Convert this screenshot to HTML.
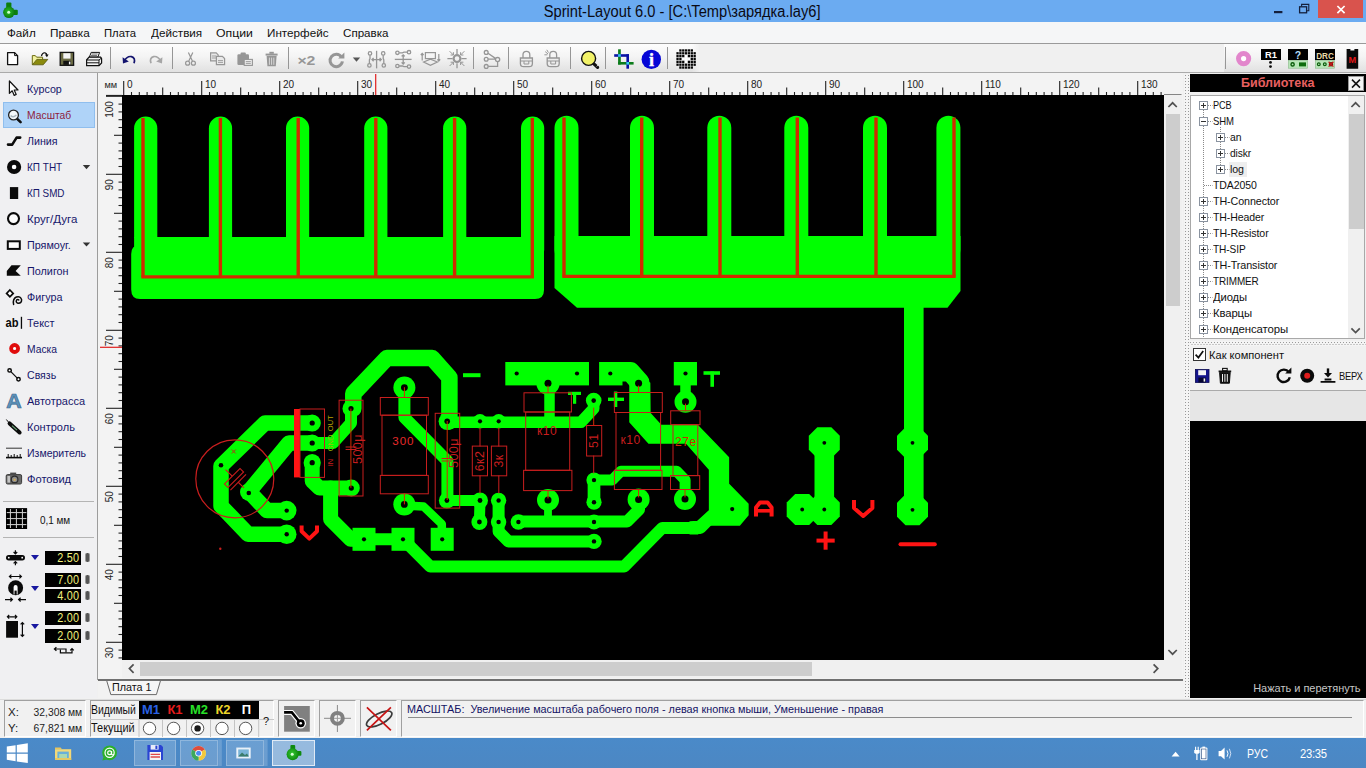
<!DOCTYPE html>
<html lang="ru"><head><meta charset="utf-8"><title>Sprint-Layout 6.0</title>
<style>
html,body{margin:0;padding:0}
body{width:1366px;height:768px;overflow:hidden;position:relative;background:#f0f0f0;font-family:"Liberation Sans",sans-serif;font-size:11px;color:#000}
.abs{position:absolute}
#title{left:0;top:0;width:1366px;height:22.6px;background:#6babf1;box-shadow:0 0.5px 0 #5f98d6}
#title .t{left:-1.2px;width:1366px;top:2.5px;text-align:center;font-size:15.6px;color:#0a0a14;line-height:18px;white-space:nowrap}
#closeb{left:1318px;top:0;width:45px;height:18px;background:#d9534d}
#menu{left:0;top:22px;width:1366px;height:21px;background:#f5f6f7}
#menu > span{position:absolute;top:3px;font-size:11.6px;line-height:15px;color:#111;white-space:nowrap}
#tb{left:0;top:43px;width:1366px;height:30px;background:#f0f0f0;border-top:1px solid #9a9a9a;border-bottom:1px solid #aaa;box-sizing:border-box}
.sep{position:absolute;top:47px;width:1px;height:22px;background:#969696}
#left{left:0;top:73px;width:97px;height:625px;background:#f0f0f2}
#leftb{left:97px;top:73px;width:1px;height:607px;background:#9c9c9c}
.tool{position:absolute;left:26.7px;font-size:11.2px;color:#16166a;line-height:14px;white-space:nowrap}
#rul{left:98px;top:73px;width:1085px;height:607px;background:#f3f3f3}
#hs{left:122px;top:660px;width:1042px;height:18px;background:#f0f0f0}
#hs .th{position:absolute;left:18px;top:2px;width:672px;height:14px;background:#cdcdcd}
#vs{left:1164px;top:95px;width:18px;height:565px;background:#f0f0f0}
#vs .th{position:absolute;left:1.5px;top:18.5px;width:14.5px;height:192px;background:#cdcdcd}
#corner{left:1164px;top:660px;width:18px;height:18px;background:#f0f0f0}
#dline{left:98px;top:679px;width:1085px;height:2px;background:#707070}
#tabs{left:98px;top:681px;width:1092px;height:17px;background:#f2f2f2}
#split{left:1184px;top:74px;width:6px;height:624px;background-color:#f4f4f4;background-image:radial-gradient(#999 0.7px,transparent 0.9px);background-size:3px 3px}
#lib{left:1190px;top:74px;width:176px;height:18px;background:#000}
#lib .t{position:absolute;left:0;width:176px;top:1px;text-align:center;font-weight:bold;font-size:13.2px;line-height:16px;color:#e86060}
#libx{left:1348px;top:76px;width:16px;height:15px;background:#f4f4f4;border:1px solid #999;box-sizing:border-box}
#tree{left:1190px;top:95px;width:175px;height:244px;background:#fff;border:1px solid #a8a8a8;box-sizing:border-box;overflow:hidden}
.ti{position:absolute;font-size:11.3px;line-height:14px;color:#111;white-space:nowrap;letter-spacing:-0.1px}
.bx{position:absolute;width:9px;height:9px;border:1px solid #8a93a0;box-sizing:border-box;background:#fff}
.bx:before{content:"";position:absolute;left:1px;top:3px;width:5px;height:1px;background:#333}
.bx.p:after{content:"";position:absolute;left:3px;top:1px;width:1px;height:5px;background:#333}
#tsb{left:1348px;top:96px;width:16px;height:242px;background:#f0f0f0}
#tsb .th{position:absolute;left:1px;top:18px;width:15px;height:115px;background:#cdcdcd}
#rp{left:1190px;top:339px;width:176px;height:52px;background:#f0f0f0}
#gray{left:1190px;top:390px;width:176px;height:31px;background:#e6e6e6;border-top:1px solid #aaa;box-sizing:border-box}
#prev{left:1190px;top:421px;width:176px;height:278px;background:#000}
#prev > span{position:absolute;right:6px;bottom:4px;color:#c6c6c6;font-size:11.5px;line-height:14px;white-space:nowrap}
#status{left:0;top:698px;width:1366px;height:40px;background:#f1f1f1}
.panel{position:absolute;box-sizing:border-box;border:1px solid #a0a0a0;border-right-color:#fff;border-bottom-color:#fff;background:#f1f1f1}
#task{left:0;top:738px;width:1366px;height:30px;background:linear-gradient(#4a8ac9,#4c87c3)}
.tbtn{position:absolute;top:739.5px;height:26.5px;background:rgba(255,255,255,.18);box-sizing:border-box;border:1px solid rgba(255,255,255,.25)}
.vbox{position:absolute;left:45px;width:36px;height:14px;background:#000;color:#f2f27c;font-size:12px;line-height:14px;text-align:right;padding-right:2px;box-sizing:border-box;letter-spacing:.2px}
.hnd{position:absolute;left:85px;width:5px;height:9px;background:#555;border-radius:2px;border-left:1px solid #999;border-right:1px solid #999;box-sizing:border-box}
.tri{position:absolute;left:31px;width:0;height:0;border-left:4px solid transparent;border-right:4px solid transparent;border-top:5px solid #1818a0}
.hl{position:absolute;left:3px;width:91px;height:1px;background:#b4b4b4}

.tbg{position:absolute;top:44px;height:28px;background:linear-gradient(#fdfdfd,#f4f4f4 45%,#e1e1e1)}

</style></head>
<body>
<div id="title" class="abs"><div class="t abs"><span style="display:inline-block;white-space:pre;transform:scaleX(0.9405);transform-origin:center center">Sprint-Layout 6.0 - [C:\Temp\зарядка.lay6]</span></div></div>
<div id="closeb" class="abs"></div>
<div id="menu" class="abs"><span style="left:7px"><span style="display:inline-block;white-space:pre;transform:scaleX(1.0065);transform-origin:left center">Файл</span></span><span style="left:50px"><span style="display:inline-block;white-space:pre;transform:scaleX(1.0135);transform-origin:left center">Правка</span></span><span style="left:104px"><span style="display:inline-block;white-space:pre;transform:scaleX(0.9750);transform-origin:left center">Плата</span></span><span style="left:151px"><span style="display:inline-block;white-space:pre;transform:scaleX(1.0079);transform-origin:left center">Действия</span></span><span style="left:216px"><span style="display:inline-block;white-space:pre;transform:scaleX(1.0576);transform-origin:left center">Опции</span></span><span style="left:267px"><span style="display:inline-block;white-space:pre;transform:scaleX(1.0069);transform-origin:left center">Интерфейс</span></span><span style="left:343px"><span style="display:inline-block;white-space:pre;transform:scaleX(1.0003);transform-origin:left center">Справка</span></span></div>
<div id="tb" class="abs"></div><div class="tbg" style="left:0;width:699px"></div><div class="tbg" style="left:1224px;width:142px"></div><div class="abs" style="left:692px;top:44px;width:8px;height:28px;background:linear-gradient(to right,rgba(240,240,240,0),#f0f0f0)"></div>
<div class="sep" style="left:110px"></div><div class="sep" style="left:172px"></div><div class="sep" style="left:288px"></div><div class="sep" style="left:473px"></div><div class="sep" style="left:508px"></div><div class="sep" style="left:570px"></div><div class="sep" style="left:605px"></div><div class="sep" style="left:667px"></div><div class="sep" style="left:1225px"></div>
<svg style="position:absolute;left:0;top:0;pointer-events:none" width="1366" height="768" viewBox="0 0 1366 768" font-family="'Liberation Sans', sans-serif" ><path d="M7.6,52.6 H14.6 L17.6,55.6 V64.6 H7.6 Z" fill="#fff" stroke="#111" stroke-width="1.3" stroke-linejoin="round"/><path d="M14.6,52.6 V55.6 H17.6" fill="none" stroke="#111" stroke-width="1"/><path d="M32.3,64.7 V55.6 H35.3 L36.6,57.2 H42.6 V59.5" fill="#f2f2a0" stroke="#6a6a10" stroke-width="1"/><path d="M32.4,64.8 L36.8,59.4 H47.8 L43.2,64.8 Z" fill="#8a8a0c" stroke="#55550a" stroke-width=".8"/><path d="M41.4,56 Q42.4,52.4 45,52.8 Q46.8,53.2 46.9,55.2" fill="none" stroke="#111" stroke-width="1.2"/><path d="M44.9,54.4 L48.6,54.6 L46.9,57.2 Z" fill="#111"/><rect x="60.2" y="52.4" width="13.4" height="12.9" fill="#6b6b44" stroke="#111" stroke-width="1.3"/><rect x="63.3" y="53.2" width="7.2" height="5.4" fill="#f4f4f4"/><rect x="63.3" y="60.8" width="7.4" height="4" fill="#111"/><rect x="68.9" y="61.6" width="1.5" height="2.8" fill="#f4f4f4"/><path d="M89.3,57.2 L91.2,52.4 H99.6 L97.8,57.2 Z" fill="#fff" stroke="#111" stroke-width="1"/><path d="M86.6,60 L89,57.2 H100.6 L101.6,58.6 V63 L99,65.6 H86.6 Z" fill="#f4f4f4" stroke="#111" stroke-width="1.2"/><path d="M86.6,60 H99 L101.6,58 M99,60 V65.6 M86.6,62.8 H99" fill="none" stroke="#111" stroke-width="1"/><path d="M91.6,54 H97.6 M91,55.6 H97" stroke="#444" stroke-width=".8"/><path d="M124.6,60.6 Q127.2,55.8 131.4,56.6 Q135.8,57.8 134,63.2" fill="none" stroke="#14146e" stroke-width="1.7"/><path d="M122.6,57.2 L123,63.4 L128.8,61.6 Z" fill="#14146e"/><path d="M160.4,60.6 Q157.8,55.8 153.6,56.6 Q149.2,57.8 151,63.2" fill="none" stroke="#a6a6a6" stroke-width="1.7"/><path d="M162.4,57.2 L162,63.4 L156.2,61.6 Z" fill="#a6a6a6"/><g fill="none" stroke="#969696" stroke-width="1.2"><path d="M188.4,52.4 L192.4,61 M192.8,52.4 L188.8,61"/><circle cx="187.6" cy="63.2" r="2"/><circle cx="193.4" cy="63.2" r="2"/></g><g fill="#e9e9e9" stroke="#969696" stroke-width="1.2"><path d="M210.6,52.9 H216.2 L218.2,54.9 V60.9 H210.6 Z"/><path d="M216.4,56.4 H222.4 L224.6,58.6 V64.6 H216.4 Z"/></g><path d="M212,56 H216 M212,58 H216 M218,60.6 H223 M218,62.4 H223" stroke="#969696" stroke-width=".9"/><rect x="237.4" y="54.2" width="11.6" height="10.8" rx="1.2" fill="#969696"/><rect x="240.6" y="52.6" width="5.2" height="3" rx="1" fill="#969696"/><rect x="244.2" y="59.4" width="8.2" height="6" fill="#ececec" stroke="#969696" stroke-width="1.1"/><path d="M245.8,61.6 H250.8 M245.8,63.4 H250.8" stroke="#969696" stroke-width=".9"/><path d="M266.6,56 H276.6 L275.8,66.2 H267.4 Z" fill="#969696"/><rect x="265.6" y="53.6" width="12" height="2" fill="#969696"/><rect x="269.4" y="51.8" width="4.4" height="2" fill="#969696"/><path d="M269.4,57.6 V64.8 M271.6,57.6 V64.8 M273.8,57.6 V64.8" stroke="#dedede" stroke-width=".9"/><text x="297.4" y="64.6" font-size="13.6" font-weight="bold" fill="#969696" textLength="18" lengthAdjust="spacingAndGlyphs">×2</text><path d="M341.4,57 A6.2,6.2 0 1 0 342.4,61.4" fill="none" stroke="#969696" stroke-width="3"/><path d="M338.2,58.6 L344.4,58.6 L344.4,52.4 Z" fill="#969696"/><path d="M352.8,57.6 H360.2 L356.5,61.8 Z" fill="#555"/><g fill="none" stroke="#969696" stroke-width="1.3"><path d="M376.6,50.8 V68.4"/><circle cx="370" cy="53.4" r="1.7"/><circle cx="369.4" cy="65.4" r="1.7"/><path d="M370,55.2 V58.6 L369.4,60 V63.6"/><circle cx="383.2" cy="53.4" r="1.7"/><circle cx="383.8" cy="65.4" r="1.7"/><path d="M383.2,55.2 V58.6 L383.8,60 V63.6"/><path d="M372,59.6 H381.2 M373.6,58 L372,59.6 L373.6,61.2 M379.6,58 L381.2,59.6 L379.6,61.2"/></g><g fill="none" stroke="#969696" stroke-width="1.3"><path d="M394.8,59.4 H411.6"/><circle cx="397.4" cy="52.8" r="1.7"/><circle cx="409" cy="52.2" r="1.7"/><path d="M399.2,52.8 H402.4 L404,52.2 H407.2"/><circle cx="397.4" cy="66" r="1.7"/><circle cx="409" cy="66.6" r="1.7"/><path d="M399.2,66 H402.4 L404,66.6 H407.2"/><path d="M403.2,54.8 V64 M401.6,56.4 L403.2,54.8 L404.8,56.4 M401.6,62.4 L403.2,64 L404.8,62.4"/></g><g fill="none" stroke="#969696" stroke-width="1.2"><rect x="425.4" y="52.6" width="10" height="6"/><path d="M423.6,62 L430.4,59.2 L437.4,62 L430.4,65.4 Z"/><path d="M422.2,60.4 V53.4 M420.8,55 L422.2,53.4 L423.6,55 M438.8,54 V61 M437.4,59.4 L438.8,61 L440.2,59.4"/></g><g fill="none" stroke="#969696" stroke-width="1.3"><circle cx="457" cy="58.6" r="3.4" stroke-width="2.2"/><path d="M447.4,58.6 H452.6 M461.4,58.6 H466.6 M457,49 V54 M457,63.2 V68.2"/><path d="M449.6,51.2 L453.4,55 M450.6,55 H453.4 V52.2 M464.4,51.2 L460.6,55 M463.4,55 H460.6 V52.2 M449.6,66 L453.4,62.2 M450.6,62.2 H453.4 V65 M464.4,66 L460.6,62.2 M463.4,62.2 H460.6 V65" stroke-width="1"/></g><g fill="none" stroke="#969696" stroke-width="1.3"><circle cx="486.2" cy="52.4" r="1.9"/><circle cx="486.2" cy="59.2" r="1.9"/><circle cx="486.2" cy="66.4" r="1.9"/><circle cx="497.6" cy="59.6" r="2.1"/><path d="M488,53.2 L495.8,58.6 M488.2,59.2 H495.4 M488.2,66.4 H497.6 V61.8"/></g><g fill="none" stroke="#969696" stroke-width="1.3"><path d="M523.0,58 V54.8 A3.4,3.4 0 0 1 529.8,54.8 V58"/><path d="M520.4,58 H532.4 V63.4 Q532.4,66.6 529.0,66.6 H523.8 Q520.4,66.6 520.4,63.4 Z" fill="#ececec"/><path d="M520.4,61 H532.4 M524.0,61 V64 H528.8 V61" stroke-width="1"/></g><g fill="none" stroke="#969696" stroke-width="1.3"><path d="M549.8000000000001,58 V54.8 A3.4,3.4 0 0 1 556.6,54.8 V58"/><path d="M547.2,58 H559.2 V63.4 Q559.2,66.6 555.8000000000001,66.6 H550.6 Q547.2,66.6 547.2,63.4 Z" fill="#ececec"/><path d="M547.2,61 H559.2 M550.8000000000001,61 V64 H555.6 V61" stroke-width="1"/></g><path d="M545.2,51.6 L548,54 M544.4,54.8 H547.4 M546.8,49.8 L548.4,52.6" stroke="#969696" stroke-width="1"/><path d="M593.6,63.6 L597.6,67.4" stroke="#111" stroke-width="3.2" stroke-linecap="round"/><circle cx="588.6" cy="58.4" r="7" fill="#f2f268" stroke="#111" stroke-width="1.4"/><path d="M596.6,66.4 L598.2,65" stroke="#fff" stroke-width=".8"/><rect x="618.1" y="49.3" width="2.7" height="15.2" fill="#0c7c1c"/><rect x="618.1" y="62" width="15.5" height="2.6" fill="#0c7c1c"/><rect x="614.2" y="54.2" width="14.8" height="2.6" fill="#0a12a4"/><rect x="626.4" y="54.2" width="2.6" height="14.5" fill="#0a12a4"/><rect x="618.1" y="54.2" width="2.7" height="2.6" fill="#34ccf2"/><rect x="626.4" y="62" width="2.6" height="2.6" fill="#34ccf2"/><circle cx="651.3" cy="59.4" r="9.7" fill="#0606d6"/><text x="651.4" y="65.6" font-family="'Liberation Serif', serif" font-size="18" font-weight="bold" fill="#fff" stroke="#fff" stroke-width=".4" text-anchor="middle">i</text><circle cx="686.1" cy="59" r="9.6" fill="#f6f6f6"/><rect x="676.40" y="52.15" width="2.3" height="2.3" fill="#050505"/><rect x="676.40" y="55.00" width="2.3" height="2.3" fill="#050505"/><rect x="676.40" y="57.85" width="2.3" height="2.3" fill="#050505"/><rect x="676.40" y="60.70" width="2.3" height="2.3" fill="#050505"/><rect x="676.40" y="63.55" width="2.3" height="2.3" fill="#050505"/><rect x="679.25" y="49.30" width="2.3" height="2.3" fill="#050505"/><rect x="679.25" y="52.15" width="2.3" height="2.3" fill="#050505"/><rect x="679.25" y="55.00" width="2.3" height="2.3" fill="#050505"/><rect x="679.25" y="57.85" width="2.3" height="2.3" fill="#050505"/><rect x="679.25" y="60.70" width="2.3" height="2.3" fill="#050505"/><rect x="679.25" y="63.55" width="2.3" height="2.3" fill="#050505"/><rect x="679.25" y="66.40" width="2.3" height="2.3" fill="#050505"/><rect x="682.10" y="49.30" width="2.3" height="2.3" fill="#050505"/><rect x="682.10" y="52.15" width="2.3" height="2.3" fill="#050505"/><rect x="682.10" y="55.00" width="2.3" height="2.3" fill="#050505"/><rect x="682.10" y="57.85" width="2.3" height="2.3" fill="#fff"/><rect x="682.10" y="60.70" width="2.3" height="2.3" fill="#050505"/><rect x="682.10" y="63.55" width="2.3" height="2.3" fill="#050505"/><rect x="682.10" y="66.40" width="2.3" height="2.3" fill="#050505"/><rect x="684.95" y="49.30" width="2.3" height="2.3" fill="#050505"/><rect x="684.95" y="52.15" width="2.3" height="2.3" fill="#050505"/><rect x="684.95" y="55.00" width="2.3" height="2.3" fill="#fff"/><rect x="684.95" y="57.85" width="2.3" height="2.3" fill="#fff"/><rect x="684.95" y="60.70" width="2.3" height="2.3" fill="#fff"/><rect x="684.95" y="63.55" width="2.3" height="2.3" fill="#050505"/><rect x="684.95" y="66.40" width="2.3" height="2.3" fill="#050505"/><rect x="687.80" y="49.30" width="2.3" height="2.3" fill="#050505"/><rect x="687.80" y="52.15" width="2.3" height="2.3" fill="#050505"/><rect x="687.80" y="55.00" width="2.3" height="2.3" fill="#050505"/><rect x="687.80" y="57.85" width="2.3" height="2.3" fill="#fff"/><rect x="687.80" y="60.70" width="2.3" height="2.3" fill="#050505"/><rect x="687.80" y="63.55" width="2.3" height="2.3" fill="#050505"/><rect x="687.80" y="66.40" width="2.3" height="2.3" fill="#050505"/><rect x="690.65" y="49.30" width="2.3" height="2.3" fill="#050505"/><rect x="690.65" y="52.15" width="2.3" height="2.3" fill="#050505"/><rect x="690.65" y="55.00" width="2.3" height="2.3" fill="#050505"/><rect x="690.65" y="57.85" width="2.3" height="2.3" fill="#050505"/><rect x="690.65" y="60.70" width="2.3" height="2.3" fill="#050505"/><rect x="690.65" y="63.55" width="2.3" height="2.3" fill="#050505"/><rect x="690.65" y="66.40" width="2.3" height="2.3" fill="#050505"/><rect x="693.50" y="52.15" width="2.3" height="2.3" fill="#050505"/><rect x="693.50" y="55.00" width="2.3" height="2.3" fill="#050505"/><rect x="693.50" y="57.85" width="2.3" height="2.3" fill="#050505"/><rect x="693.50" y="60.70" width="2.3" height="2.3" fill="#050505"/><rect x="693.50" y="63.55" width="2.3" height="2.3" fill="#050505"/><circle cx="1243.6" cy="58.6" r="5.1" fill="#fff" stroke="#e286cc" stroke-width="5"/><rect x="1261" y="49" width="20" height="11" fill="#000"/><text x="1271" y="58" font-size="9.4" font-weight="bold" fill="#fff" text-anchor="middle">R1</text><circle cx="1270.5" cy="62.4" r="1.4" fill="#111"/><circle cx="1270.5" cy="66.6" r="1.4" fill="#111"/><rect x="1288" y="49" width="20" height="11" fill="#000"/><text x="1298" y="59.2" font-size="10.5" font-weight="bold" fill="#b4dcf8" text-anchor="middle">?</text><rect x="1288.4" y="60.4" width="19.2" height="7.8" fill="#b8e6b8" stroke="#8ab88a" stroke-width=".6"/><circle cx="1292.6" cy="64.4" r="1.6" fill="none" stroke="#0c5c0c" stroke-width="1.4"/><rect x="1299" y="62.4" width="7" height="4" fill="#0c6c0c"/><rect x="1315" y="49" width="20" height="11" fill="#000"/><text x="1325" y="58.6" font-size="9.6" font-weight="bold" fill="#e8d8a8" text-anchor="middle" textLength="17.6" lengthAdjust="spacingAndGlyphs">DRC</text><rect x="1315.4" y="60.4" width="19.2" height="7.8" fill="#b8e6b8" stroke="#8ab88a" stroke-width=".6"/><circle cx="1318.8" cy="64.2" r="1.4" fill="none" stroke="#0c5c0c" stroke-width="1.2"/><circle cx="1324.8" cy="64.2" r="1.4" fill="none" stroke="#0c5c0c" stroke-width="1.2"/><circle cx="1331" cy="64.2" r="1.6" fill="none" stroke="#701010" stroke-width="1.3"/><path d="M1328.6,61.8 L1333.4,66.6 M1333.4,61.8 L1328.6,66.6" stroke="#c01818" stroke-width="1.3"/><path d="M1346.6,49 H1350.4 V50.4 H1354.4 V49 H1358.2 V68.8 H1346.6 Z" fill="#0a0a0a"/><text x="1352.4" y="62.6" font-size="9.2" font-weight="bold" fill="#e01818" text-anchor="middle">M</text></svg>
<div id="left" class="abs"></div><div id="leftb" class="abs"></div>
<div class="abs" style="left:3px;top:102px;width:92px;height:26px;background:#afd3f8;border:1px solid #8fbeee;box-sizing:border-box"></div>
<div class="tool" style="top:82.1px"><span style="display:inline-block;white-space:pre;transform:scaleX(0.9567);transform-origin:left center">Курсор</span></div>
<div class="tool" style="top:108.1px;color:#8e1c3c"><span style="display:inline-block;white-space:pre;transform:scaleX(0.9232);transform-origin:left center">Масштаб</span></div>
<div class="tool" style="top:134.1px"><span style="display:inline-block;white-space:pre;transform:scaleX(0.9539);transform-origin:left center">Линия</span></div>
<div class="tool" style="top:160.1px"><span style="display:inline-block;white-space:pre;transform:scaleX(0.8929);transform-origin:left center">КП ТНТ</span></div>
<div class="tool" style="top:186.1px"><span style="display:inline-block;white-space:pre;transform:scaleX(0.8817);transform-origin:left center">КП SMD</span></div>
<div class="tool" style="top:212.1px"><span style="display:inline-block;white-space:pre;transform:scaleX(1.0312);transform-origin:left center">Круг/Дуга</span></div>
<div class="tool" style="top:238.1px"><span style="display:inline-block;white-space:pre;transform:scaleX(0.9624);transform-origin:left center">Прямоуг.</span></div>
<div class="tool" style="top:264.1px"><span style="display:inline-block;white-space:pre;transform:scaleX(0.9667);transform-origin:left center">Полигон</span></div>
<div class="tool" style="top:290.1px"><span style="display:inline-block;white-space:pre;transform:scaleX(0.9633);transform-origin:left center">Фигура</span></div>
<div class="tool" style="top:316.1px"><span style="display:inline-block;white-space:pre;transform:scaleX(0.9762);transform-origin:left center">Текст</span></div>
<div class="tool" style="top:342.1px"><span style="display:inline-block;white-space:pre;transform:scaleX(0.9195);transform-origin:left center">Маска</span></div>
<div class="tool" style="top:368.1px"><span style="display:inline-block;white-space:pre;transform:scaleX(0.9443);transform-origin:left center">Связь</span></div>
<div class="tool" style="top:394.1px"><span style="display:inline-block;white-space:pre;transform:scaleX(0.9810);transform-origin:left center">Автотрасса</span></div>
<div class="tool" style="top:420.1px"><span style="display:inline-block;white-space:pre;transform:scaleX(0.9854);transform-origin:left center">Контроль</span></div>
<div class="tool" style="top:446.1px"><span style="display:inline-block;white-space:pre;transform:scaleX(0.9416);transform-origin:left center">Измеритель</span></div>
<div class="tool" style="top:472.1px"><span style="display:inline-block;white-space:pre;transform:scaleX(0.9928);transform-origin:left center">Фотовид</span></div>
<div class="hl" style="top:501px"></div><div class="hl" style="top:537px"></div>
<div class="abs" style="left:40px;top:512.5px;font-size:11.5px;line-height:14px;color:#111;white-space:nowrap"><span style="display:inline-block;white-space:pre;transform:scaleX(0.8629);transform-origin:left center">0,1 мм</span></div>
<div class="vbox" style="top:551px"><span style="display:inline-block;white-space:pre;transform:scaleX(0.9066);transform-origin:right center">2.50</span></div><div class="hnd" style="top:553px"></div>
<div class="vbox" style="top:573px"><span style="display:inline-block;white-space:pre;transform:scaleX(0.9066);transform-origin:right center">7.00</span></div><div class="hnd" style="top:575px"></div>
<div class="vbox" style="top:589px"><span style="display:inline-block;white-space:pre;transform:scaleX(0.9066);transform-origin:right center">4.00</span></div><div class="hnd" style="top:591px"></div>
<div class="vbox" style="top:611px"><span style="display:inline-block;white-space:pre;transform:scaleX(0.9066);transform-origin:right center">2.00</span></div><div class="hnd" style="top:613px"></div>
<div class="vbox" style="top:628.5px"><span style="display:inline-block;white-space:pre;transform:scaleX(0.9066);transform-origin:right center">2.00</span></div><div class="hnd" style="top:631px"></div>
<div class="tri" style="top:555px"></div><div class="tri" style="top:586px"></div><div class="tri" style="top:624px"></div>
<svg style="position:absolute;left:0;top:0;pointer-events:none" width="1366" height="768" viewBox="0 0 1366 768" font-family="'Liberation Sans', sans-serif" ><path d="M9.4,81 V93.4 L12.2,90.8 L14.2,95.4 L16.2,94.5 L14.2,90 H18 Z" fill="#fff" stroke="#111" stroke-width="1.2" stroke-linejoin="round"/><path d="M17.2,118.8 L20.6,122.2" stroke="#111" stroke-width="2.6" stroke-linecap="round"/><circle cx="13.5" cy="115" r="4.9" fill="#f4f8fa" stroke="#222" stroke-width="1.3"/><path d="M10.6,115.6 Q13.4,118 16.4,115" fill="none" stroke="#a8b4bc" stroke-width="1.4"/><path d="M8,144.6 H12.2 L16.6,137.6 H20.2" fill="none" stroke="#0c0c0c" stroke-width="2.6" stroke-linecap="round" stroke-linejoin="round"/><circle cx="14.1" cy="167" r="4.7" fill="#fff" stroke="#0a0a0a" stroke-width="4.8"/><path d="M82.8,165 H90.2 L86.5,169.2 Z" fill="#333"/><path d="M82.8,242.4 H90.2 L86.5,246.6 Z" fill="#333"/><rect x="9.9" y="187.1" width="8.3" height="11.9" fill="#0a0a0a"/><circle cx="13.5" cy="218.6" r="5.5" fill="#fdfdfd" stroke="#0a0a0a" stroke-width="2.1"/><rect x="7.8" y="241.3" width="12" height="7.6" fill="#fdfdfd" stroke="#0a0a0a" stroke-width="2"/><path d="M6.8,275.8 V271 L11.5,265.3 H20.8 L15.6,271 L20.8,275.8 Z" fill="#0a0a0a"/><path d="M9.9,290 L13.2,293.4 L9.9,296.8 L6.6,293.4 Z" fill="#fff" stroke="#0a0a0a" stroke-width="1.7"/><path d="M13.6,304.4 Q12.4,299 16.4,297 Q20.6,295.8 21.6,299.6 Q21.8,303.4 18,303.2 Q15.4,302.4 16.6,300 Q17.8,298.8 18.8,300" fill="none" stroke="#0a0a0a" stroke-width="1.5" stroke-linecap="round"/><text x="5.6" y="327.4" font-size="13.4" font-weight="bold" fill="#0a0a0a" textLength="13" lengthAdjust="spacingAndGlyphs">ab</text><rect x="20.8" y="316.8" width="1.3" height="12" fill="#0a0a0a"/><circle cx="14.6" cy="348.5" r="3.5" fill="#fbd8d8" stroke="#e00c0c" stroke-width="3.8"/><circle cx="14.6" cy="348.5" r="1.2" fill="#fff"/><path d="M9.6,370.4 L18.5,379.3" stroke="#0a0a0a" stroke-width="1.2"/><circle cx="9.6" cy="370.4" r="1.7" fill="#fff" stroke="#0a0a0a" stroke-width="1.5"/><circle cx="18.5" cy="379.3" r="1.7" fill="#fff" stroke="#0a0a0a" stroke-width="1.5"/><text x="14" y="407.6" font-size="19.5" font-weight="bold" fill="#5f93ba" stroke="#3e6c92" stroke-width=".7" text-anchor="middle" textLength="15.4" lengthAdjust="spacingAndGlyphs">A</text><path d="M6.6,419.8 L10,424" stroke="#111" stroke-width="1" stroke-linecap="round"/><path d="M9.6,423.4 L19.6,432.4" stroke="#0c0c0c" stroke-width="4" stroke-linecap="round"/><path d="M12,425.6 L17,430.2" stroke="#6ea87c" stroke-width="1.1"/><path d="M19.4,432 L20.8,434" stroke="#111" stroke-width="1.4"/><path d="M6,448.2 H22" stroke="#333" stroke-width="1"/><path d="M6,457.6 H22" stroke="#0a0a0a" stroke-width="1.6"/><path d="M8.2,457 V454 M11.2,457 V455 M14.2,457 V454 M17.2,457 V455 M20.2,457 V454" stroke="#0a0a0a" stroke-width="1"/><rect x="6.2" y="474.6" width="15.4" height="9.4" rx="1.4" fill="#6a6a6a" stroke="#3a3a3a" stroke-width="1"/><rect x="10.2" y="472.6" width="6" height="2.6" fill="#4a4a4a"/><circle cx="14.6" cy="479.4" r="3.3" fill="#8c8c8c" stroke="#2c2c2c" stroke-width="1.2"/><circle cx="14.6" cy="479.8" r="1.3" fill="#c8a860"/><rect x="7.4" y="476" width="2.6" height="6.6" fill="#c4c4c4"/><rect x="6" y="508.1" width="21.1" height="20.9" fill="#000"/><path d="M10.4,509 V528 M16.4,509 V528 M22.4,509 V528 M6.8,512.6 H26.4 M6.8,518.6 H26.4 M6.8,524.6 H26.4" stroke="#d4d4d4" stroke-width="1"/><rect x="6" y="555" width="19" height="5.4" rx="2.7" fill="#0a0a0a"/><circle cx="8.8" cy="557.7" r=".9" fill="#fff"/><circle cx="22.2" cy="557.7" r=".9" fill="#fff"/><path d="M15.4,550.2 V553.4 M13.6,552 L15.4,553.8 L17.2,552 M15.4,565.2 V562 M13.6,563.4 L15.4,561.6 L17.2,563.4" fill="none" stroke="#0a0a0a" stroke-width="1.2"/><circle cx="15.6" cy="587.8" r="7.5" fill="#0a0a0a"/><path d="M13.6,594.6 V587 Q13.6,585 15.6,585 Q17.6,585 17.6,587 V594.6 Z" fill="#fff"/><rect x="14.5" y="590.6" width="2.2" height="4.4" fill="#0a0a0a"/><path d="M9.4,576.5 H21.4 M11.4,574.6 L9.4,576.5 L11.4,578.4 M19.4,574.6 L21.4,576.5 L19.4,578.4" fill="none" stroke="#0a0a0a" stroke-width="1.2"/><path d="M5,599.6 H12.4 M10.4,597.7 L12.4,599.6 L10.4,601.5 M26,599.6 H18.6 M20.6,597.7 L18.6,599.6 L20.6,601.5" fill="none" stroke="#0a0a0a" stroke-width="1.2"/><rect x="6.1" y="621" width="11.9" height="16.7" fill="#0a0a0a"/><path d="M7.4,616.8 H16.8 M9.2,615 L7.4,616.8 L9.2,618.6 M15,615 L16.8,616.8 L15,618.6" fill="none" stroke="#0a0a0a" stroke-width="1.2"/><path d="M22.4,622.6 V636.4 M20.6,624.4 L22.4,622.6 L24.2,624.4 M20.6,634.6 L22.4,636.4 L24.2,634.6" fill="none" stroke="#0a0a0a" stroke-width="1.2"/><path d="M54.4,649 H66 V652.6 M56.4,647.2 L54.4,649 L56.4,650.8" fill="none" stroke="#0a0a0a" stroke-width="1.2"/><path d="M60.4,649.4 V652.8 H72 V648.6 M70.2,650.4 L72,648.6 L73.8,650.4" fill="none" stroke="#0a0a0a" stroke-width="1.2"/></svg>
<div id="rul" class="abs"></div>
<svg style="position:absolute;left:0;top:0" width="1366" height="96" font-family="'Liberation Sans', sans-serif" font-size="10" fill="#222"><g stroke="#222" stroke-width="1.1"><line x1="123.7" y1="81" x2="123.7" y2="95"/><line x1="131.5" y1="92" x2="131.5" y2="95"/><line x1="139.3" y1="92" x2="139.3" y2="95"/><line x1="147.1" y1="92" x2="147.1" y2="95"/><line x1="154.9" y1="92" x2="154.9" y2="95"/><line x1="162.7" y1="87.5" x2="162.7" y2="95"/><line x1="170.5" y1="92" x2="170.5" y2="95"/><line x1="178.3" y1="92" x2="178.3" y2="95"/><line x1="186.1" y1="92" x2="186.1" y2="95"/><line x1="193.9" y1="92" x2="193.9" y2="95"/><line x1="201.7" y1="81" x2="201.7" y2="95"/><line x1="209.5" y1="92" x2="209.5" y2="95"/><line x1="217.3" y1="92" x2="217.3" y2="95"/><line x1="225.1" y1="92" x2="225.1" y2="95"/><line x1="232.9" y1="92" x2="232.9" y2="95"/><line x1="240.7" y1="87.5" x2="240.7" y2="95"/><line x1="248.5" y1="92" x2="248.5" y2="95"/><line x1="256.3" y1="92" x2="256.3" y2="95"/><line x1="264.1" y1="92" x2="264.1" y2="95"/><line x1="271.9" y1="92" x2="271.9" y2="95"/><line x1="279.7" y1="81" x2="279.7" y2="95"/><line x1="287.5" y1="92" x2="287.5" y2="95"/><line x1="295.3" y1="92" x2="295.3" y2="95"/><line x1="303.1" y1="92" x2="303.1" y2="95"/><line x1="310.9" y1="92" x2="310.9" y2="95"/><line x1="318.7" y1="87.5" x2="318.7" y2="95"/><line x1="326.5" y1="92" x2="326.5" y2="95"/><line x1="334.3" y1="92" x2="334.3" y2="95"/><line x1="342.1" y1="92" x2="342.1" y2="95"/><line x1="349.9" y1="92" x2="349.9" y2="95"/><line x1="357.7" y1="81" x2="357.7" y2="95"/><line x1="365.5" y1="92" x2="365.5" y2="95"/><line x1="373.3" y1="92" x2="373.3" y2="95"/><line x1="381.1" y1="92" x2="381.1" y2="95"/><line x1="388.9" y1="92" x2="388.9" y2="95"/><line x1="396.7" y1="87.5" x2="396.7" y2="95"/><line x1="404.5" y1="92" x2="404.5" y2="95"/><line x1="412.3" y1="92" x2="412.3" y2="95"/><line x1="420.1" y1="92" x2="420.1" y2="95"/><line x1="427.9" y1="92" x2="427.9" y2="95"/><line x1="435.7" y1="81" x2="435.7" y2="95"/><line x1="443.5" y1="92" x2="443.5" y2="95"/><line x1="451.3" y1="92" x2="451.3" y2="95"/><line x1="459.1" y1="92" x2="459.1" y2="95"/><line x1="466.9" y1="92" x2="466.9" y2="95"/><line x1="474.7" y1="87.5" x2="474.7" y2="95"/><line x1="482.5" y1="92" x2="482.5" y2="95"/><line x1="490.3" y1="92" x2="490.3" y2="95"/><line x1="498.1" y1="92" x2="498.1" y2="95"/><line x1="505.9" y1="92" x2="505.9" y2="95"/><line x1="513.7" y1="81" x2="513.7" y2="95"/><line x1="521.5" y1="92" x2="521.5" y2="95"/><line x1="529.3" y1="92" x2="529.3" y2="95"/><line x1="537.1" y1="92" x2="537.1" y2="95"/><line x1="544.9" y1="92" x2="544.9" y2="95"/><line x1="552.7" y1="87.5" x2="552.7" y2="95"/><line x1="560.5" y1="92" x2="560.5" y2="95"/><line x1="568.3" y1="92" x2="568.3" y2="95"/><line x1="576.1" y1="92" x2="576.1" y2="95"/><line x1="583.9" y1="92" x2="583.9" y2="95"/><line x1="591.7" y1="81" x2="591.7" y2="95"/><line x1="599.5" y1="92" x2="599.5" y2="95"/><line x1="607.3" y1="92" x2="607.3" y2="95"/><line x1="615.1" y1="92" x2="615.1" y2="95"/><line x1="622.9" y1="92" x2="622.9" y2="95"/><line x1="630.7" y1="87.5" x2="630.7" y2="95"/><line x1="638.5" y1="92" x2="638.5" y2="95"/><line x1="646.3" y1="92" x2="646.3" y2="95"/><line x1="654.1" y1="92" x2="654.1" y2="95"/><line x1="661.9" y1="92" x2="661.9" y2="95"/><line x1="669.7" y1="81" x2="669.7" y2="95"/><line x1="677.5" y1="92" x2="677.5" y2="95"/><line x1="685.3" y1="92" x2="685.3" y2="95"/><line x1="693.1" y1="92" x2="693.1" y2="95"/><line x1="700.9" y1="92" x2="700.9" y2="95"/><line x1="708.7" y1="87.5" x2="708.7" y2="95"/><line x1="716.5" y1="92" x2="716.5" y2="95"/><line x1="724.3" y1="92" x2="724.3" y2="95"/><line x1="732.1" y1="92" x2="732.1" y2="95"/><line x1="739.9" y1="92" x2="739.9" y2="95"/><line x1="747.7" y1="81" x2="747.7" y2="95"/><line x1="755.5" y1="92" x2="755.5" y2="95"/><line x1="763.3" y1="92" x2="763.3" y2="95"/><line x1="771.1" y1="92" x2="771.1" y2="95"/><line x1="778.9" y1="92" x2="778.9" y2="95"/><line x1="786.7" y1="87.5" x2="786.7" y2="95"/><line x1="794.5" y1="92" x2="794.5" y2="95"/><line x1="802.3" y1="92" x2="802.3" y2="95"/><line x1="810.1" y1="92" x2="810.1" y2="95"/><line x1="817.9" y1="92" x2="817.9" y2="95"/><line x1="825.7" y1="81" x2="825.7" y2="95"/><line x1="833.5" y1="92" x2="833.5" y2="95"/><line x1="841.3" y1="92" x2="841.3" y2="95"/><line x1="849.1" y1="92" x2="849.1" y2="95"/><line x1="856.9" y1="92" x2="856.9" y2="95"/><line x1="864.7" y1="87.5" x2="864.7" y2="95"/><line x1="872.5" y1="92" x2="872.5" y2="95"/><line x1="880.3" y1="92" x2="880.3" y2="95"/><line x1="888.1" y1="92" x2="888.1" y2="95"/><line x1="895.9" y1="92" x2="895.9" y2="95"/><line x1="903.7" y1="81" x2="903.7" y2="95"/><line x1="911.5" y1="92" x2="911.5" y2="95"/><line x1="919.3" y1="92" x2="919.3" y2="95"/><line x1="927.1" y1="92" x2="927.1" y2="95"/><line x1="934.9" y1="92" x2="934.9" y2="95"/><line x1="942.7" y1="87.5" x2="942.7" y2="95"/><line x1="950.5" y1="92" x2="950.5" y2="95"/><line x1="958.3" y1="92" x2="958.3" y2="95"/><line x1="966.1" y1="92" x2="966.1" y2="95"/><line x1="973.9" y1="92" x2="973.9" y2="95"/><line x1="981.7" y1="81" x2="981.7" y2="95"/><line x1="989.5" y1="92" x2="989.5" y2="95"/><line x1="997.3" y1="92" x2="997.3" y2="95"/><line x1="1005.1" y1="92" x2="1005.1" y2="95"/><line x1="1012.9" y1="92" x2="1012.9" y2="95"/><line x1="1020.7" y1="87.5" x2="1020.7" y2="95"/><line x1="1028.5" y1="92" x2="1028.5" y2="95"/><line x1="1036.3" y1="92" x2="1036.3" y2="95"/><line x1="1044.1" y1="92" x2="1044.1" y2="95"/><line x1="1051.9" y1="92" x2="1051.9" y2="95"/><line x1="1059.7" y1="81" x2="1059.7" y2="95"/><line x1="1067.5" y1="92" x2="1067.5" y2="95"/><line x1="1075.3" y1="92" x2="1075.3" y2="95"/><line x1="1083.1" y1="92" x2="1083.1" y2="95"/><line x1="1090.9" y1="92" x2="1090.9" y2="95"/><line x1="1098.7" y1="87.5" x2="1098.7" y2="95"/><line x1="1106.5" y1="92" x2="1106.5" y2="95"/><line x1="1114.3" y1="92" x2="1114.3" y2="95"/><line x1="1122.1" y1="92" x2="1122.1" y2="95"/><line x1="1129.9" y1="92" x2="1129.9" y2="95"/><line x1="1137.7" y1="81" x2="1137.7" y2="95"/><line x1="1145.5" y1="92" x2="1145.5" y2="95"/><line x1="1153.3" y1="92" x2="1153.3" y2="95"/><line x1="1161.1" y1="92" x2="1161.1" y2="95"/></g><text x="126.9" y="88.4">0</text><text x="204.9" y="88.4">10</text><text x="282.9" y="88.4">20</text><text x="360.9" y="88.4">30</text><text x="438.9" y="88.4">40</text><text x="516.9" y="88.4">50</text><text x="594.9" y="88.4">60</text><text x="672.9" y="88.4">70</text><text x="750.9" y="88.4">80</text><text x="828.9" y="88.4">90</text><text x="906.9" y="88.4">100</text><text x="984.9" y="88.4">110</text><text x="1062.9" y="88.4">120</text><text x="1140.9" y="88.4">130</text><text x="104.4" y="88.2" font-size="9.2">мм</text><line x1="106" y1="95.5" x2="122" y2="95.5" stroke="#222" stroke-width="1.2"/><line x1="375.7" y1="74" x2="375.7" y2="95" stroke="#e02020" stroke-width="1.2"/><line x1="1164" y1="95" x2="1181.5" y2="95" stroke="#555" stroke-width="1.4"/></svg>
<svg style="position:absolute;left:0;top:0" width="124" height="680" font-family="'Liberation Sans', sans-serif" font-size="10" fill="#222"><g stroke="#222" stroke-width="1.1"><line x1="106" y1="96.3" x2="122" y2="96.3"/><line x1="118.5" y1="104.1" x2="122" y2="104.1"/><line x1="118.5" y1="111.9" x2="122" y2="111.9"/><line x1="118.5" y1="119.7" x2="122" y2="119.7"/><line x1="118.5" y1="127.5" x2="122" y2="127.5"/><line x1="114" y1="135.3" x2="122" y2="135.3"/><line x1="118.5" y1="143.1" x2="122" y2="143.1"/><line x1="118.5" y1="150.9" x2="122" y2="150.9"/><line x1="118.5" y1="158.7" x2="122" y2="158.7"/><line x1="118.5" y1="166.5" x2="122" y2="166.5"/><line x1="106" y1="174.3" x2="122" y2="174.3"/><line x1="118.5" y1="182.1" x2="122" y2="182.1"/><line x1="118.5" y1="189.9" x2="122" y2="189.9"/><line x1="118.5" y1="197.7" x2="122" y2="197.7"/><line x1="118.5" y1="205.5" x2="122" y2="205.5"/><line x1="114" y1="213.3" x2="122" y2="213.3"/><line x1="118.5" y1="221.1" x2="122" y2="221.1"/><line x1="118.5" y1="228.9" x2="122" y2="228.9"/><line x1="118.5" y1="236.7" x2="122" y2="236.7"/><line x1="118.5" y1="244.5" x2="122" y2="244.5"/><line x1="106" y1="252.3" x2="122" y2="252.3"/><line x1="118.5" y1="260.1" x2="122" y2="260.1"/><line x1="118.5" y1="267.9" x2="122" y2="267.9"/><line x1="118.5" y1="275.7" x2="122" y2="275.7"/><line x1="118.5" y1="283.5" x2="122" y2="283.5"/><line x1="114" y1="291.3" x2="122" y2="291.3"/><line x1="118.5" y1="299.1" x2="122" y2="299.1"/><line x1="118.5" y1="306.9" x2="122" y2="306.9"/><line x1="118.5" y1="314.7" x2="122" y2="314.7"/><line x1="118.5" y1="322.5" x2="122" y2="322.5"/><line x1="106" y1="330.3" x2="122" y2="330.3"/><line x1="118.5" y1="338.1" x2="122" y2="338.1"/><line x1="118.5" y1="345.9" x2="122" y2="345.9"/><line x1="118.5" y1="353.7" x2="122" y2="353.7"/><line x1="118.5" y1="361.5" x2="122" y2="361.5"/><line x1="114" y1="369.3" x2="122" y2="369.3"/><line x1="118.5" y1="377.1" x2="122" y2="377.1"/><line x1="118.5" y1="384.9" x2="122" y2="384.9"/><line x1="118.5" y1="392.7" x2="122" y2="392.7"/><line x1="118.5" y1="400.5" x2="122" y2="400.5"/><line x1="106" y1="408.3" x2="122" y2="408.3"/><line x1="118.5" y1="416.1" x2="122" y2="416.1"/><line x1="118.5" y1="423.9" x2="122" y2="423.9"/><line x1="118.5" y1="431.7" x2="122" y2="431.7"/><line x1="118.5" y1="439.5" x2="122" y2="439.5"/><line x1="114" y1="447.3" x2="122" y2="447.3"/><line x1="118.5" y1="455.1" x2="122" y2="455.1"/><line x1="118.5" y1="462.9" x2="122" y2="462.9"/><line x1="118.5" y1="470.7" x2="122" y2="470.7"/><line x1="118.5" y1="478.5" x2="122" y2="478.5"/><line x1="106" y1="486.3" x2="122" y2="486.3"/><line x1="118.5" y1="494.1" x2="122" y2="494.1"/><line x1="118.5" y1="501.9" x2="122" y2="501.9"/><line x1="118.5" y1="509.7" x2="122" y2="509.7"/><line x1="118.5" y1="517.5" x2="122" y2="517.5"/><line x1="114" y1="525.3" x2="122" y2="525.3"/><line x1="118.5" y1="533.1" x2="122" y2="533.1"/><line x1="118.5" y1="540.9" x2="122" y2="540.9"/><line x1="118.5" y1="548.7" x2="122" y2="548.7"/><line x1="118.5" y1="556.5" x2="122" y2="556.5"/><line x1="106" y1="564.3" x2="122" y2="564.3"/><line x1="118.5" y1="572.1" x2="122" y2="572.1"/><line x1="118.5" y1="579.9" x2="122" y2="579.9"/><line x1="118.5" y1="587.7" x2="122" y2="587.7"/><line x1="118.5" y1="595.5" x2="122" y2="595.5"/><line x1="114" y1="603.3" x2="122" y2="603.3"/><line x1="118.5" y1="611.1" x2="122" y2="611.1"/><line x1="118.5" y1="618.9" x2="122" y2="618.9"/><line x1="118.5" y1="626.7" x2="122" y2="626.7"/><line x1="118.5" y1="634.5" x2="122" y2="634.5"/><line x1="106" y1="642.3" x2="122" y2="642.3"/><line x1="118.5" y1="650.1" x2="122" y2="650.1"/><line x1="118.5" y1="657.9" x2="122" y2="657.9"/></g><text x="113.3" y="101.1" transform="rotate(-90 113.3 101.1)" text-anchor="end">100</text><text x="113.3" y="179.1" transform="rotate(-90 113.3 179.1)" text-anchor="end">90</text><text x="113.3" y="257.1" transform="rotate(-90 113.3 257.1)" text-anchor="end">80</text><text x="113.3" y="335.1" transform="rotate(-90 113.3 335.1)" text-anchor="end">70</text><text x="113.3" y="413.1" transform="rotate(-90 113.3 413.1)" text-anchor="end">60</text><text x="113.3" y="491.1" transform="rotate(-90 113.3 491.1)" text-anchor="end">50</text><text x="113.3" y="569.1" transform="rotate(-90 113.3 569.1)" text-anchor="end">40</text><text x="113.3" y="647.1" transform="rotate(-90 113.3 647.1)" text-anchor="end">30</text><line x1="100" y1="347.3" x2="122" y2="347.3" stroke="#e02020" stroke-width="1.2"/></svg>
<svg id="pcb" width="1042" height="565" viewBox="122 95 1042 565" style="position:absolute;left:122px;top:95px;background:#000" font-family="'Liberation Sans', sans-serif">
<polyline points="145.7,128.2 145.7,250.0" fill="none" stroke="#00ff00" stroke-width="23.2" stroke-linecap="round" stroke-linejoin="round"/>
<polyline points="220.5,128.2 220.5,250.0" fill="none" stroke="#00ff00" stroke-width="23.2" stroke-linecap="round" stroke-linejoin="round"/>
<polyline points="297.6,128.2 297.6,250.0" fill="none" stroke="#00ff00" stroke-width="23.2" stroke-linecap="round" stroke-linejoin="round"/>
<polyline points="375.8,128.2 375.8,250.0" fill="none" stroke="#00ff00" stroke-width="23.2" stroke-linecap="round" stroke-linejoin="round"/>
<polyline points="454.7,128.2 454.7,250.0" fill="none" stroke="#00ff00" stroke-width="23.2" stroke-linecap="round" stroke-linejoin="round"/>
<polyline points="532.6,128.2 532.6,250.0" fill="none" stroke="#00ff00" stroke-width="23.2" stroke-linecap="round" stroke-linejoin="round"/>
<path d="M134,237 H544 V290 Q544,299 535,299 H140 Q131.2,299 131.2,289.5 V254 Q131.2,245.6 139,245.6 Z" fill="#00ff00"/>
<polyline points="566.5,127.8 566.5,250.0" fill="none" stroke="#00ff00" stroke-width="24" stroke-linecap="round" stroke-linejoin="round"/>
<polyline points="642.0,127.8 642.0,250.0" fill="none" stroke="#00ff00" stroke-width="24" stroke-linecap="round" stroke-linejoin="round"/>
<polyline points="719.3,127.8 719.3,250.0" fill="none" stroke="#00ff00" stroke-width="24" stroke-linecap="round" stroke-linejoin="round"/>
<polyline points="796.3,127.8 796.3,250.0" fill="none" stroke="#00ff00" stroke-width="24" stroke-linecap="round" stroke-linejoin="round"/>
<polyline points="875.0,127.8 875.0,250.0" fill="none" stroke="#00ff00" stroke-width="24" stroke-linecap="round" stroke-linejoin="round"/>
<polyline points="948.4,127.8 948.4,250.0" fill="none" stroke="#00ff00" stroke-width="24" stroke-linecap="round" stroke-linejoin="round"/>
<polygon points="554.5,236.0 960.5,236.0 960.5,291.0 947.5,307.8 577.0,307.8 554.5,288.0" fill="#00ff00"/>
<polyline points="913.8,300.0 913.8,510.0" fill="none" stroke="#00ff00" stroke-width="19.6" stroke-linecap="butt" stroke-linejoin="round"/>
<polygon points="817.3,427.3 831.3,427.3 839.8,435.8 839.8,449.8 831.3,458.3 817.3,458.3 808.8,449.8 808.8,435.8" fill="#00ff00"/>
<polygon points="795.2,494.0 809.2,494.0 817.7,502.5 817.7,516.5 809.2,525.0 795.2,525.0 786.7,516.5 786.7,502.5" fill="#00ff00"/>
<polygon points="817.3,494.0 831.3,494.0 839.8,502.5 839.8,516.5 831.3,525.0 817.3,525.0 808.8,516.5 808.8,502.5" fill="#00ff00"/>
<polygon points="905.5,427.3 919.5,427.3 928.0,435.8 928.0,449.8 919.5,458.3 905.5,458.3 897.0,449.8 897.0,435.8" fill="#00ff00"/>
<polygon points="905.5,494.3 919.5,494.3 928.0,502.8 928.0,516.8 919.5,525.3 905.5,525.3 897.0,516.8 897.0,502.8" fill="#00ff00"/>
<polyline points="824.3,442.8 824.3,509.5" fill="none" stroke="#00ff00" stroke-width="19.6" stroke-linecap="butt" stroke-linejoin="round"/>
<polyline points="312.2,423.0 265.0,423.0 221.0,466.0 221.0,506.0 248.0,534.2 286.7,534.2" fill="none" stroke="#00ff00" stroke-width="15.5" stroke-linecap="round" stroke-linejoin="round"/>
<circle cx="286.7" cy="534.2" r="9.8" fill="#00ff00"/>
<polyline points="312.2,443.0 289.0,443.0 249.0,491.5 267.0,510.6 286.7,510.6" fill="none" stroke="#00ff00" stroke-width="15.5" stroke-linecap="round" stroke-linejoin="round"/>
<circle cx="286.7" cy="510.6" r="9.8" fill="#00ff00"/>
<circle cx="249.0" cy="492.0" r="9" fill="#00ff00"/>
<circle cx="312.2" cy="423.0" r="8.6" fill="#00ff00"/>
<circle cx="312.2" cy="443.0" r="8.6" fill="#00ff00"/>
<circle cx="312.2" cy="462.7" r="8.6" fill="#00ff00"/>
<polyline points="312.2,443.0 333.0,443.0 351.0,423.0 351.0,408.6" fill="none" stroke="#00ff00" stroke-width="12" stroke-linecap="round" stroke-linejoin="round"/>
<circle cx="351.0" cy="408.6" r="8.5" fill="#00ff00"/>
<polyline points="353.3,408.6 353.3,393.5 386.8,358.1 432.3,358.1 449.4,377.4 449.4,421.4" fill="none" stroke="#00ff00" stroke-width="16.5" stroke-linecap="round" stroke-linejoin="round"/>
<polyline points="312.2,462.7 312.2,481.0 319.5,488.1 351.3,488.1" fill="none" stroke="#00ff00" stroke-width="15" stroke-linecap="round" stroke-linejoin="round"/>
<circle cx="351.3" cy="488.1" r="8.5" fill="#00ff00"/>
<polyline points="330.6,488.1 330.6,519.3 350.6,539.3 364.0,539.3" fill="none" stroke="#00ff00" stroke-width="15" stroke-linecap="round" stroke-linejoin="round"/>
<rect x="352.5" y="527.8" width="23.0" height="23.0" fill="#00ff00" rx="0"/>
<rect x="391.5" y="527.8" width="23.0" height="23.0" fill="#00ff00" rx="0"/>
<rect x="430.7" y="527.8" width="23.0" height="23.0" fill="#00ff00" rx="0"/>
<polyline points="364.0,539.3 403.0,539.3" fill="none" stroke="#00ff00" stroke-width="12" stroke-linecap="butt" stroke-linejoin="round"/>
<polyline points="403.0,539.3 430.2,566.5 624.2,566.5 662.3,527.9 700.4,527.9 712.0,516.0" fill="none" stroke="#00ff00" stroke-width="12" stroke-linecap="round" stroke-linejoin="round"/>
<circle cx="404.4" cy="387.6" r="11" fill="#00ff00"/>
<polyline points="404.4,387.6 404.4,417.5 447.4,461.0 447.4,500.5" fill="none" stroke="#00ff00" stroke-width="12" stroke-linecap="round" stroke-linejoin="round"/>
<circle cx="404.3" cy="504.4" r="11" fill="#00ff00"/>
<polyline points="404.3,505.5 423.5,506.5 441.8,524.0 441.9,539.0" fill="none" stroke="#00ff00" stroke-width="8.5" stroke-linecap="round" stroke-linejoin="round"/>
<polyline points="447.2,422.2 581.0,422.2 593.7,408.5 593.7,400.6" fill="none" stroke="#00ff00" stroke-width="11.6" stroke-linecap="round" stroke-linejoin="round"/>
<circle cx="447.2" cy="421.3" r="8.6" fill="#00ff00"/>
<circle cx="480.0" cy="421.3" r="7.2" fill="#00ff00"/>
<circle cx="498.7" cy="421.3" r="7.2" fill="#00ff00"/>
<circle cx="593.7" cy="400.6" r="7.8" fill="#00ff00"/>
<rect x="505.3" y="362.0" width="83.7" height="23.4" fill="#00ff00" rx="0"/>
<circle cx="548.0" cy="383.2" r="11.6" fill="#00ff00"/>
<polyline points="549.5,383.0 549.5,422.0" fill="none" stroke="#00ff00" stroke-width="10.5" stroke-linecap="butt" stroke-linejoin="round"/>
<rect x="599.1" y="362.0" width="23.4" height="23.4" fill="#00ff00" rx="0"/>
<polyline points="612.0,371.8 630.5,371.8 639.8,382.5 639.8,412.0" fill="none" stroke="#00ff00" stroke-width="19.5" stroke-linecap="round" stroke-linejoin="round"/>
<polygon points="630.0,383.0 649.6,383.0 649.9,413.2 661.0,425.4 697.5,425.4 728.4,457.5 728.4,484.0 747.9,503.9 747.9,515.0 739.5,525.0 708.5,525.0 697.5,533.8 690.0,533.8 690.0,522.0 697.5,521.6 709.6,510.6 709.6,469.6 686.4,443.0 648.8,443.0 630.0,422.0" fill="#00ff00" stroke="#00ff00" stroke-width="1.5" stroke-linejoin="round"/>
<rect x="673.8" y="362.0" width="23.2" height="23.4" fill="#00ff00" rx="0"/>
<polyline points="685.5,380.0 685.5,401.8" fill="none" stroke="#00ff00" stroke-width="10.5" stroke-linecap="butt" stroke-linejoin="round"/>
<circle cx="685.5" cy="401.8" r="11" fill="#00ff00"/>
<polyline points="594.0,480.1 594.0,502.2" fill="none" stroke="#00ff00" stroke-width="12.7" stroke-linecap="round" stroke-linejoin="round"/>
<circle cx="594.0" cy="480.1" r="7.6" fill="#00ff00"/>
<circle cx="594.0" cy="502.2" r="7.6" fill="#00ff00"/>
<polyline points="594.0,480.0 612.3,480.0 620.8,471.2 676.7,471.2 685.1,480.0 685.1,499.0" fill="none" stroke="#00ff00" stroke-width="11" stroke-linecap="round" stroke-linejoin="round"/>
<circle cx="685.0" cy="499.0" r="11" fill="#00ff00"/>
<polyline points="518.4,521.6 627.0,521.6 639.0,509.5 639.0,499.4" fill="none" stroke="#00ff00" stroke-width="12" stroke-linecap="round" stroke-linejoin="round"/>
<circle cx="638.6" cy="499.4" r="11" fill="#00ff00"/>
<circle cx="518.4" cy="522.0" r="7.8" fill="#00ff00"/>
<circle cx="594.0" cy="522.0" r="7.4" fill="#00ff00"/>
<polyline points="498.6,500.5 498.6,531.5 508.5,541.4 594.0,541.4" fill="none" stroke="#00ff00" stroke-width="12" stroke-linecap="round" stroke-linejoin="round"/>
<circle cx="498.6" cy="500.5" r="7.7" fill="#00ff00"/>
<circle cx="498.6" cy="522.0" r="7.7" fill="#00ff00"/>
<circle cx="594.0" cy="541.4" r="7.7" fill="#00ff00"/>
<polyline points="446.9,500.5 480.0,500.5 479.4,522.0" fill="none" stroke="#00ff00" stroke-width="11" stroke-linecap="round" stroke-linejoin="round"/>
<circle cx="446.9" cy="500.5" r="8" fill="#00ff00"/>
<circle cx="480.0" cy="500.5" r="8" fill="#00ff00"/>
<circle cx="479.4" cy="522.0" r="8" fill="#00ff00"/>
<circle cx="548.0" cy="500.0" r="11" fill="#00ff00"/>
<polyline points="548.0,500.0 548.0,521.0" fill="none" stroke="#00ff00" stroke-width="7.8" stroke-linecap="butt" stroke-linejoin="round"/>
<polyline points="463.0,375.2 480.5,375.2" fill="none" stroke="#00ff00" stroke-width="4" stroke-linecap="butt" stroke-linejoin="round"/>
<polyline points="568.0,393.4 581.0,393.4" fill="none" stroke="#00ff00" stroke-width="3.2" stroke-linecap="butt" stroke-linejoin="round"/>
<polyline points="574.6,392.0 574.6,403.8" fill="none" stroke="#00ff00" stroke-width="3.2" stroke-linecap="butt" stroke-linejoin="round"/>
<polyline points="608.0,399.3 624.0,399.3" fill="none" stroke="#00ff00" stroke-width="3.4" stroke-linecap="butt" stroke-linejoin="round"/>
<polyline points="615.6,391.5 615.6,407.0" fill="none" stroke="#00ff00" stroke-width="3.4" stroke-linecap="butt" stroke-linejoin="round"/>
<polyline points="703.5,373.0 720.0,373.0" fill="none" stroke="#00ff00" stroke-width="3.6" stroke-linecap="butt" stroke-linejoin="round"/>
<polyline points="712.2,371.5 712.2,386.8" fill="none" stroke="#00ff00" stroke-width="3.6" stroke-linecap="butt" stroke-linejoin="round"/>
<circle cx="824.3" cy="442.8" r="1.9" fill="#000"/>
<circle cx="802.2" cy="509.5" r="1.9" fill="#000"/>
<circle cx="824.3" cy="509.5" r="1.9" fill="#000"/>
<circle cx="912.5" cy="442.8" r="1.9" fill="#000"/>
<circle cx="912.5" cy="509.8" r="1.9" fill="#000"/>
<circle cx="286.7" cy="534.2" r="2.2" fill="#000"/>
<circle cx="286.7" cy="510.6" r="2.2" fill="#000"/>
<circle cx="248.8" cy="493.0" r="2.3" fill="#000"/>
<circle cx="221.0" cy="465.3" r="2.3" fill="#000"/>
<circle cx="312.2" cy="423.0" r="2.6" fill="#000"/>
<circle cx="312.2" cy="443.0" r="2.6" fill="#000"/>
<circle cx="312.2" cy="462.7" r="2.6" fill="#000"/>
<circle cx="351.0" cy="408.6" r="2.6" fill="#000"/>
<circle cx="351.3" cy="488.1" r="2.6" fill="#000"/>
<circle cx="364.0" cy="539.3" r="2.1" fill="#000"/>
<circle cx="403.0" cy="539.3" r="2.1" fill="#000"/>
<circle cx="442.2" cy="539.3" r="2.1" fill="#000"/>
<circle cx="404.4" cy="387.6" r="3.4" fill="#000"/>
<circle cx="404.3" cy="504.4" r="3.4" fill="#000"/>
<circle cx="447.2" cy="421.3" r="2.8" fill="#000"/>
<circle cx="480.0" cy="421.3" r="2.1" fill="#000"/>
<circle cx="498.7" cy="421.3" r="2.1" fill="#000"/>
<circle cx="593.7" cy="400.6" r="2.3" fill="#000"/>
<circle cx="516.7" cy="373.5" r="2.1" fill="#000"/>
<circle cx="577.0" cy="373.5" r="2.1" fill="#000"/>
<circle cx="548.0" cy="383.2" r="3.5" fill="#000"/>
<circle cx="610.3" cy="373.5" r="2.1" fill="#000"/>
<circle cx="638.6" cy="383.2" r="3.5" fill="#000"/>
<circle cx="732.2" cy="509.1" r="2.1" fill="#000"/>
<circle cx="685.5" cy="373.5" r="2.1" fill="#000"/>
<circle cx="685.5" cy="401.8" r="3.5" fill="#000"/>
<circle cx="594.0" cy="480.1" r="2.2" fill="#000"/>
<circle cx="594.0" cy="502.2" r="2.2" fill="#000"/>
<circle cx="685.0" cy="499.0" r="3.5" fill="#000"/>
<circle cx="638.6" cy="499.4" r="3.5" fill="#000"/>
<circle cx="518.4" cy="522.0" r="2.2" fill="#000"/>
<circle cx="594.0" cy="522.0" r="2.2" fill="#000"/>
<circle cx="498.6" cy="500.5" r="2.2" fill="#000"/>
<circle cx="498.6" cy="522.0" r="2.2" fill="#000"/>
<circle cx="594.0" cy="541.4" r="2.2" fill="#000"/>
<circle cx="446.9" cy="500.5" r="2.4" fill="#000"/>
<circle cx="480.0" cy="500.5" r="2.4" fill="#000"/>
<circle cx="479.4" cy="522.0" r="2.4" fill="#000"/>
<circle cx="548.0" cy="500.0" r="3.5" fill="#000"/>
<polyline points="143.0,118.0 143.0,277.0" fill="none" stroke="#d02c00" stroke-width="3.4" stroke-linecap="butt" stroke-linejoin="round"/>
<polyline points="220.4,118.0 220.4,277.0" fill="none" stroke="#d02c00" stroke-width="3.4" stroke-linecap="butt" stroke-linejoin="round"/>
<polyline points="298.2,118.0 298.2,277.0" fill="none" stroke="#d02c00" stroke-width="3.4" stroke-linecap="butt" stroke-linejoin="round"/>
<polyline points="375.8,118.0 375.8,277.0" fill="none" stroke="#d02c00" stroke-width="3.4" stroke-linecap="butt" stroke-linejoin="round"/>
<polyline points="454.6,118.0 454.6,277.0" fill="none" stroke="#d02c00" stroke-width="3.4" stroke-linecap="butt" stroke-linejoin="round"/>
<polyline points="532.3,118.0 532.3,277.0" fill="none" stroke="#d02c00" stroke-width="3.4" stroke-linecap="butt" stroke-linejoin="round"/>
<polyline points="141.3,276.9 534.0,276.9" fill="none" stroke="#d02c00" stroke-width="3.4" stroke-linecap="butt" stroke-linejoin="round"/>
<polyline points="564.0,117.5 564.0,276.5" fill="none" stroke="#d02c00" stroke-width="3.4" stroke-linecap="butt" stroke-linejoin="round"/>
<polyline points="641.7,117.5 641.7,276.5" fill="none" stroke="#d02c00" stroke-width="3.4" stroke-linecap="butt" stroke-linejoin="round"/>
<polyline points="720.0,117.5 720.0,276.5" fill="none" stroke="#d02c00" stroke-width="3.4" stroke-linecap="butt" stroke-linejoin="round"/>
<polyline points="797.3,117.5 797.3,276.5" fill="none" stroke="#d02c00" stroke-width="3.4" stroke-linecap="butt" stroke-linejoin="round"/>
<polyline points="876.0,117.5 876.0,276.5" fill="none" stroke="#d02c00" stroke-width="3.4" stroke-linecap="butt" stroke-linejoin="round"/>
<polyline points="954.0,117.5 954.0,276.5" fill="none" stroke="#d02c00" stroke-width="3.4" stroke-linecap="butt" stroke-linejoin="round"/>
<polyline points="562.3,276.4 955.7,276.4" fill="none" stroke="#d02c00" stroke-width="3.4" stroke-linecap="butt" stroke-linejoin="round"/>
<circle cx="234.8" cy="478.8" r="39" fill="none" stroke="#c81e1e" stroke-width="1.2"/>
<g transform="rotate(-45 234 478)" stroke="#c81e1e" stroke-width="1.1" fill="none"><rect x="223" y="475.5" width="22" height="5"/><line x1="234" y1="466" x2="234" y2="475.5"/><line x1="223" y1="484" x2="245" y2="484"/><line x1="234" y1="484" x2="234" y2="492"/></g>
<polyline points="232.0,449.8 235.4,453.2" fill="none" stroke="#c81e1e" stroke-width="1" stroke-linecap="round" stroke-linejoin="round"/>
<polyline points="235.4,449.8 232.0,453.2" fill="none" stroke="#c81e1e" stroke-width="1" stroke-linecap="round" stroke-linejoin="round"/>
<circle cx="220.3" cy="548.7" r="1.2" fill="#c81e1e"/>
<rect x="294.0" y="409.0" width="6.0" height="68.4" fill="#ff1414" rx="0"/>
<rect x="300.0" y="409.0" width="24.5" height="68.4" fill="none" stroke="#c81e1e" stroke-width="1"/>
<text x="333.2" y="423.2" font-size="7.5" fill="#b8a000" text-anchor="middle" font-weight="normal" transform="rotate(-90 333.2 423.2)">OUT</text>
<text x="333.2" y="443.0" font-size="7.5" fill="#a0c000" text-anchor="middle" font-weight="normal" transform="rotate(-90 333.2 443.0)">GND</text>
<text x="333.2" y="462.5" font-size="7.5" fill="#c81e1e" text-anchor="middle" font-weight="normal" transform="rotate(-90 333.2 462.5)">IN</text>
<rect x="339.1" y="400.2" width="23.9" height="95.8" fill="none" stroke="#c81e1e" stroke-width="1"/>
<polyline points="350.9,408.6 350.9,487.8" fill="none" stroke="#d02c00" stroke-width="1" stroke-linecap="butt" stroke-linejoin="round"/>
<polyline points="346.0,447.0 356.0,447.0" fill="none" stroke="#c81e1e" stroke-width="1" stroke-linecap="round" stroke-linejoin="round"/>
<polyline points="346.0,449.5 356.0,449.5" fill="none" stroke="#c81e1e" stroke-width="1" stroke-linecap="round" stroke-linejoin="round"/>
<text x="362.0" y="449.0" font-size="12.6" fill="#c81e1e" text-anchor="middle" font-weight="normal" transform="rotate(-90 362.0 449.0)" letter-spacing="0.4">500μ</text>
<rect x="380.3" y="397.5" width="48.0" height="17.7" fill="none" stroke="#c81e1e" stroke-width="1"/>
<rect x="380.3" y="475.4" width="48.0" height="18.4" fill="none" stroke="#c81e1e" stroke-width="1"/>
<rect x="382.0" y="415.2" width="44.5" height="60.2" fill="none" stroke="#c81e1e" stroke-width="1"/>
<text x="403.4" y="445.4" font-size="11.6" fill="#e42a2a" text-anchor="middle" font-weight="normal" letter-spacing="1">300</text>
<polyline points="404.4,387.6 404.4,397.5" fill="none" stroke="#d02c00" stroke-width="1" stroke-linecap="round" stroke-linejoin="round"/>
<polyline points="404.4,493.8 404.4,504.0" fill="none" stroke="#d02c00" stroke-width="1" stroke-linecap="round" stroke-linejoin="round"/>
<rect x="435.2" y="413.3" width="24.5" height="94.8" fill="none" stroke="#c81e1e" stroke-width="1"/>
<polyline points="447.2,421.0 447.2,500.0" fill="none" stroke="#d02c00" stroke-width="1" stroke-linecap="butt" stroke-linejoin="round"/>
<polyline points="442.0,458.5 452.0,458.5" fill="none" stroke="#c81e1e" stroke-width="1" stroke-linecap="round" stroke-linejoin="round"/>
<polyline points="442.0,461.0 452.0,461.0" fill="none" stroke="#c81e1e" stroke-width="1" stroke-linecap="round" stroke-linejoin="round"/>
<text x="458.2" y="453.0" font-size="12.6" fill="#c81e1e" text-anchor="middle" font-weight="normal" transform="rotate(-90 458.2 453.0)" letter-spacing="0.4">500μ</text>
<rect x="472.3" y="446.1" width="15.2" height="29.7" fill="none" stroke="#c81e1e" stroke-width="1"/>
<polyline points="480.0,428.0 480.0,446.1" fill="none" stroke="#c81e1e" stroke-width="1" stroke-linecap="round" stroke-linejoin="round"/>
<polyline points="480.0,475.8 480.0,493.0" fill="none" stroke="#c81e1e" stroke-width="1" stroke-linecap="round" stroke-linejoin="round"/>
<text x="484.4" y="461.0" font-size="12.4" fill="#c81e1e" text-anchor="middle" font-weight="normal" transform="rotate(-90 484.4 461.0)" letter-spacing="0.4">6к2</text>
<rect x="491.4" y="446.1" width="15.3" height="29.7" fill="none" stroke="#c81e1e" stroke-width="1"/>
<polyline points="498.8,428.0 498.8,446.1" fill="none" stroke="#c81e1e" stroke-width="1" stroke-linecap="round" stroke-linejoin="round"/>
<polyline points="498.8,475.8 498.8,493.0" fill="none" stroke="#c81e1e" stroke-width="1" stroke-linecap="round" stroke-linejoin="round"/>
<text x="503.2" y="461.0" font-size="12.4" fill="#c81e1e" text-anchor="middle" font-weight="normal" transform="rotate(-90 503.2 461.0)" letter-spacing="0.4">3к</text>
<rect x="524.0" y="392.8" width="47.4" height="19.2" fill="none" stroke="#c81e1e" stroke-width="1"/>
<rect x="525.7" y="412.0" width="44.0" height="58.3" fill="none" stroke="#c81e1e" stroke-width="1"/>
<rect x="523.6" y="470.3" width="48.3" height="20.3" fill="none" stroke="#c81e1e" stroke-width="1"/>
<text x="547.2" y="435.4" font-size="12" fill="#c81e1e" text-anchor="middle" font-weight="normal" letter-spacing="0.6">к10</text>
<polyline points="548.0,386.0 548.0,392.8" fill="none" stroke="#d02c00" stroke-width="1" stroke-linecap="round" stroke-linejoin="round"/>
<polyline points="548.0,490.6 548.0,498.0" fill="none" stroke="#d02c00" stroke-width="1" stroke-linecap="round" stroke-linejoin="round"/>
<rect x="586.6" y="425.5" width="15.1" height="30.5" fill="none" stroke="#c81e1e" stroke-width="1"/>
<polyline points="593.7,408.0 593.7,425.5" fill="none" stroke="#d02c00" stroke-width="1" stroke-linecap="round" stroke-linejoin="round"/>
<polyline points="593.7,456.0 593.7,473.0" fill="none" stroke="#c81e1e" stroke-width="1" stroke-linecap="round" stroke-linejoin="round"/>
<text x="598.4" y="440.8" font-size="12.4" fill="#c81e1e" text-anchor="middle" font-weight="normal" transform="rotate(-90 598.4 440.8)" letter-spacing="0.4">51</text>
<rect x="614.4" y="392.5" width="47.9" height="20.0" fill="none" stroke="#c81e1e" stroke-width="1"/>
<rect x="616.0" y="412.5" width="44.6" height="57.8" fill="none" stroke="#c81e1e" stroke-width="1"/>
<rect x="614.4" y="470.3" width="47.6" height="19.2" fill="none" stroke="#c81e1e" stroke-width="1"/>
<text x="630.6" y="444.0" font-size="12" fill="#c81e1e" text-anchor="middle" font-weight="normal" letter-spacing="0.6">к10</text>
<polyline points="638.6,386.0 638.6,392.5" fill="none" stroke="#d02c00" stroke-width="1" stroke-linecap="round" stroke-linejoin="round"/>
<polyline points="638.6,489.5 638.6,497.0" fill="none" stroke="#d02c00" stroke-width="1" stroke-linecap="round" stroke-linejoin="round"/>
<rect x="670.7" y="410.8" width="29.3" height="13.9" fill="none" stroke="#c81e1e" stroke-width="1"/>
<rect x="673.0" y="424.7" width="24.8" height="50.9" fill="none" stroke="#c81e1e" stroke-width="1"/>
<rect x="670.5" y="475.6" width="29.2" height="13.9" fill="none" stroke="#c81e1e" stroke-width="1"/>
<text x="685.8" y="445.8" font-size="12" fill="#d02c00" text-anchor="middle" font-weight="normal" letter-spacing="0.6">27е</text>
<polyline points="685.5,404.0 685.5,410.8" fill="none" stroke="#d02c00" stroke-width="1" stroke-linecap="round" stroke-linejoin="round"/>
<polyline points="685.0,489.5 685.0,497.0" fill="none" stroke="#d02c00" stroke-width="1" stroke-linecap="round" stroke-linejoin="round"/>
<polyline points="301.6,525.5 301.6,531.2 309.3,538.6 317.0,531.2 317.0,525.5" fill="none" stroke="#ff1414" stroke-width="4" stroke-linecap="butt" stroke-linejoin="round"/>
<polyline points="756.0,516.5 756.0,507.5 760.0,502.6 767.6,502.6 771.6,507.5 771.6,516.5" fill="none" stroke="#ff1414" stroke-width="4" stroke-linecap="butt" stroke-linejoin="round"/>
<polyline points="756.0,510.8 771.6,510.8" fill="none" stroke="#ff1414" stroke-width="3.6" stroke-linecap="butt" stroke-linejoin="round"/>
<polyline points="854.0,500.0 854.0,508.0 863.2,516.0 872.4,508.0 872.4,500.0" fill="none" stroke="#ff1414" stroke-width="4" stroke-linecap="butt" stroke-linejoin="round"/>
<polyline points="816.5,540.6 834.7,540.6" fill="none" stroke="#ff1414" stroke-width="4" stroke-linecap="butt" stroke-linejoin="round"/>
<polyline points="825.6,531.5 825.6,549.7" fill="none" stroke="#ff1414" stroke-width="4" stroke-linecap="butt" stroke-linejoin="round"/>
<polyline points="900.5,544.3 934.8,544.3" fill="none" stroke="#ff1414" stroke-width="4" stroke-linecap="round" stroke-linejoin="round"/>
</svg>
<div id="hs" class="abs"><div class="th"></div></div>
<div id="vs" class="abs"><div class="th"></div></div>
<div id="corner" class="abs"></div>
<div id="dline" class="abs"></div>
<div id="tabs" class="abs"></div>
<div id="split" class="abs"></div>
<div id="lib" class="abs"><div class="t"><span style="display:inline-block;white-space:pre;transform:scaleX(0.9490);transform-origin:center center">Библиотека</span></div></div>
<div id="libx" class="abs"></div>
<div id="tree" class="abs"></div>
<div id="tsb" class="abs"><div class="th"></div></div>
<div class="bx p" style="left:1199px;top:101px"></div><div class="ti" style="left:1212.7px;top:98px"><span style="display:inline-block;white-space:pre;transform:scaleX(0.8109);transform-origin:left center">PCB</span></div>
<div class="bx" style="left:1199px;top:117px"></div><div class="ti" style="left:1212.7px;top:114px"><span style="display:inline-block;white-space:pre;transform:scaleX(0.8423);transform-origin:left center">SHM</span></div>
<div class="bx p" style="left:1216px;top:133px"></div><div class="ti" style="left:1229.8px;top:130px"><span style="display:inline-block;white-space:pre;transform:scaleX(0.9212);transform-origin:left center">an</span></div>
<div class="bx p" style="left:1216px;top:149px"></div><div class="ti" style="left:1229.8px;top:146px"><span style="display:inline-block;white-space:pre;transform:scaleX(0.9076);transform-origin:left center">diskr</span></div>
<div class="abs" style="left:1229px;top:162px;width:18px;height:15px;background:#eeeeee"></div><div class="bx p" style="left:1216px;top:165px"></div><div class="ti" style="left:1229.8px;top:162px"><span style="display:inline-block;white-space:pre;transform:scaleX(0.9404);transform-origin:left center">log</span></div>
<div class="ti" style="left:1212.7px;top:178px"><span style="display:inline-block;white-space:pre;transform:scaleX(0.9292);transform-origin:left center">TDA2050</span></div>
<div class="bx p" style="left:1199px;top:197px"></div><div class="ti" style="left:1212.7px;top:194px"><span style="display:inline-block;white-space:pre;transform:scaleX(0.9491);transform-origin:left center">TH-Connector</span></div>
<div class="bx p" style="left:1199px;top:213px"></div><div class="ti" style="left:1212.7px;top:210px"><span style="display:inline-block;white-space:pre;transform:scaleX(0.9330);transform-origin:left center">TH-Header</span></div>
<div class="bx p" style="left:1199px;top:229px"></div><div class="ti" style="left:1212.7px;top:226px"><span style="display:inline-block;white-space:pre;transform:scaleX(0.9399);transform-origin:left center">TH-Resistor</span></div>
<div class="bx p" style="left:1199px;top:245px"></div><div class="ti" style="left:1212.7px;top:242px"><span style="display:inline-block;white-space:pre;transform:scaleX(0.8947);transform-origin:left center">TH-SIP</span></div>
<div class="bx p" style="left:1199px;top:261px"></div><div class="ti" style="left:1212.7px;top:258px"><span style="display:inline-block;white-space:pre;transform:scaleX(0.9550);transform-origin:left center">TH-Transistor</span></div>
<div class="bx p" style="left:1199px;top:277px"></div><div class="ti" style="left:1212.7px;top:274px"><span style="display:inline-block;white-space:pre;transform:scaleX(0.8786);transform-origin:left center">TRIMMER</span></div>
<div class="bx p" style="left:1199px;top:293px"></div><div class="ti" style="left:1212.7px;top:290px"><span style="display:inline-block;white-space:pre;transform:scaleX(0.9936);transform-origin:left center">Диоды</span></div>
<div class="bx p" style="left:1199px;top:309px"></div><div class="ti" style="left:1212.7px;top:306px"><span style="display:inline-block;white-space:pre;transform:scaleX(0.9996);transform-origin:left center">Кварцы</span></div>
<div class="bx p" style="left:1199px;top:325px"></div><div class="ti" style="left:1212.7px;top:322px"><span style="display:inline-block;white-space:pre;transform:scaleX(1.0076);transform-origin:left center">Конденсаторы</span></div>
<div id="rp" class="abs"></div>
<div class="abs" style="left:1193px;top:348px;width:13px;height:13px;background:#fff;border:1px solid #333;box-sizing:border-box"></div>
<div class="abs" style="left:1208.5px;top:347.5px;font-size:11.5px;line-height:14px;color:#111;white-space:nowrap"><span style="display:inline-block;white-space:pre;transform:scaleX(0.9642);transform-origin:left center">Как компонент</span></div>
<div class="abs" style="left:1339px;top:370px;font-size:10.2px;line-height:14px;color:#111;white-space:nowrap;letter-spacing:-0.3px"><span style="display:inline-block;white-space:pre;transform:scaleX(0.9204);transform-origin:left center">ВЕРХ</span></div>
<div id="gray" class="abs"></div>
<div id="prev" class="abs"><span><span style="display:inline-block;white-space:pre;transform:scaleX(0.9538);transform-origin:right center">Нажать и перетянуть</span></span></div>
<svg style="position:absolute;left:0;top:0;pointer-events:none" width="1366" height="768" viewBox="0 0 1366 768" font-family="'Liberation Sans', sans-serif" ><path d="M1352,79.6 L1360,87.6 M1360,79.6 L1352,87.6" stroke="#111" stroke-width="1.5"/><g stroke="#8a8a8a" stroke-width="1" stroke-dasharray="1,1" fill="none"><path d="M1203.5,110 V117"/><path d="M1203.5,126 V197"/><path d="M1203.5,206 V213"/><path d="M1203.5,222 V229"/><path d="M1203.5,238 V245"/><path d="M1203.5,254 V261"/><path d="M1203.5,270 V277"/><path d="M1203.5,286 V293"/><path d="M1203.5,302 V309"/><path d="M1203.5,318 V325"/><path d="M1203.5,334 V338"/><path d="M1220.5,127 V133"/><path d="M1220.5,142 V149"/><path d="M1220.5,158 V165"/><path d="M1208,105.5 H1212.5"/><path d="M1208,121.5 H1212.5"/><path d="M1208,201.5 H1212.5"/><path d="M1208,217.5 H1212.5"/><path d="M1208,233.5 H1212.5"/><path d="M1208,249.5 H1212.5"/><path d="M1208,265.5 H1212.5"/><path d="M1208,281.5 H1212.5"/><path d="M1208,297.5 H1212.5"/><path d="M1208,313.5 H1212.5"/><path d="M1208,329.5 H1212.5"/><path d="M1204,185.5 H1212.5"/><path d="M1225,137.5 H1229.5"/><path d="M1225,153.5 H1229.5"/><path d="M1225,169.5 H1229.5"/></g><path d="M1351.4,107 L1355.6,102.8 L1359.8,107" fill="none" stroke="#505050" stroke-width="1.7"/><path d="M1351.4,328.4 L1355.6,332.6 L1359.8,328.4" fill="none" stroke="#505050" stroke-width="1.7"/><path d="M1168.4,107 L1172.6,102.8 L1176.8,107" fill="none" stroke="#505050" stroke-width="1.7"/><path d="M1168.4,650 L1172.6,654.2 L1176.8,650" fill="none" stroke="#505050" stroke-width="1.7"/><path d="M133.6,664.4 L129.4,668.6 L133.6,672.8" fill="none" stroke="#505050" stroke-width="1.7"/><path d="M1153.6,664.4 L1157.8,668.6 L1153.6,672.8" fill="none" stroke="#505050" stroke-width="1.7"/><path d="M1195.6,354.6 L1198.4,357.6 L1203.2,351" fill="none" stroke="#111" stroke-width="1.7"/><rect x="1195.4" y="369.5" width="13.6" height="12.9" fill="#14148c" stroke="#0a0a50" stroke-width=".8"/><rect x="1198.2" y="370.2" width="7.8" height="5" fill="#f4f4f4"/><rect x="1198.4" y="377.6" width="7.6" height="4.8" fill="#060630"/><rect x="1203.6" y="378.4" width="1.6" height="3.2" fill="#f4f4f4"/><path d="M1219.6,372.4 H1230.2 L1229.4,383.2 H1220.4 Z" fill="#111" stroke="#111" stroke-width="1"/><path d="M1218.6,371.4 H1231.2" stroke="#111" stroke-width="1.8"/><rect x="1222.6" y="368.4" width="4.6" height="2.4" fill="none" stroke="#111" stroke-width="1.1"/><path d="M1222.5,374 V381.8 M1224.9,374 V381.8 M1227.3,374 V381.8" stroke="#f4f4f4" stroke-width="1"/><path d="M1288.8,372.2 A6.2,6.2 0 1 0 1289.8,377.2" fill="none" stroke="#0a0a0a" stroke-width="2.4"/><path d="M1285.2,373.6 L1291.4,373.6 L1291.4,367.4 Z" fill="#0a0a0a"/><circle cx="1307.2" cy="375.7" r="7" fill="#0a0a0a"/><circle cx="1307.2" cy="375.7" r="3" fill="#e01c1c"/><path d="M1328,368.4 V374.4" stroke="#0a0a0a" stroke-width="2.4"/><path d="M1324,373 H1332 L1328,377.4 Z" fill="#0a0a0a"/><path d="M1324.6,378.6 H1331.4 V380.4 H1324.6 Z M1320.6,381 H1335.4 V382.8 H1320.6 Z" fill="#0a0a0a"/><rect x="1190" y="341" width="176" height="5" fill="#f4f4f4"/><g stroke="#9a9a9a" stroke-width="1" stroke-dasharray="1,2"><path d="M1190,342.5 H1366"/><path d="M1191.5,344.5 H1366"/></g></svg>
<div id="status" class="abs"></div>
<div class="abs" style="left:0;top:699px;width:1366px;height:1px;background:#dcdcdc"></div>
<div class="panel" style="left:4px;top:700px;width:82px;height:37px"></div>
<div class="abs" style="left:8px;top:705px;font-size:11.5px;line-height:14px;color:#222">X:</div>
<div class="abs" style="left:8px;top:720.5px;font-size:11.5px;line-height:14px;color:#222">Y:</div>
<div class="abs" style="left:20px;top:705px;width:62.5px;text-align:right;font-size:11.5px;line-height:14px;color:#222;white-space:nowrap"><span style="display:inline-block;white-space:pre;transform:scaleX(0.8969);transform-origin:right center">32,308 мм</span></div>
<div class="abs" style="left:20px;top:720.5px;width:62.5px;text-align:right;font-size:11.5px;line-height:14px;color:#222;white-space:nowrap"><span style="display:inline-block;white-space:pre;transform:scaleX(0.8969);transform-origin:right center">67,821 мм</span></div>
<div class="panel" style="left:90px;top:700px;width:184px;height:37px"></div>
<div class="abs" style="left:90.5px;top:702.5px;font-size:12px;line-height:14px;color:#111;white-space:nowrap;letter-spacing:-0.1px"><span style="display:inline-block;white-space:pre;transform:scaleX(0.8714);transform-origin:left center">Видимый</span></div>
<div class="abs" style="left:91px;top:721px;font-size:12px;line-height:14px;color:#111;white-space:nowrap"><span style="display:inline-block;white-space:pre;transform:scaleX(0.9104);transform-origin:left center">Текущий</span></div>
<div class="abs" style="left:90px;top:718.5px;width:184px;height:1px;background:#c8c8c8"></div>
<div class="abs" style="left:139px;top:701px;width:120px;height:18px;background:#000"></div>
<div class="abs lyr" style="left:139px;top:702px;width:24px;text-align:center;font-weight:bold;font-size:13px;line-height:16px;color:#2a62e4">М1</div>
<div class="abs lyr" style="left:163px;top:702px;width:24px;text-align:center;font-weight:bold;font-size:13px;line-height:16px;color:#e81c1c">К1</div>
<div class="abs lyr" style="left:187px;top:702px;width:24px;text-align:center;font-weight:bold;font-size:13px;line-height:16px;color:#28e028">М2</div>
<div class="abs lyr" style="left:211px;top:702px;width:24px;text-align:center;font-weight:bold;font-size:13px;line-height:16px;color:#ecd428">К2</div>
<div class="abs lyr" style="left:235px;top:702px;width:23px;text-align:center;font-weight:bold;font-size:13px;line-height:16px;color:#fff">П</div>
<div class="abs" style="left:263px;top:714px;font-size:11px;line-height:14px;color:#111">?</div>
<div class="panel" style="left:278px;top:700px;width:37px;height:37px"></div>
<div class="panel" style="left:319px;top:700px;width:37px;height:37px"></div>
<div class="panel" style="left:360px;top:700px;width:37px;height:37px"></div>
<div class="panel" style="left:401px;top:700px;width:963px;height:37px"></div>
<div class="abs" style="left:406.8px;top:701.6px;font-size:11.3px;line-height:14px;color:#141464;white-space:pre"><span style="display:inline-block;white-space:pre;transform:scaleX(0.9594);transform-origin:left center">МАСШТАБ:  Увеличение масштаба рабочего поля - левая кнопка мыши, Уменьшение - правая</span></div>
<div class="abs" style="left:408px;top:717px;width:944px;height:1px;background:#8c8c8c"></div>
<svg style="position:absolute;left:0;top:0;pointer-events:none" width="1366" height="768" viewBox="0 0 1366 768" font-family="'Liberation Sans', sans-serif" ><path d="M106.8,681 L110.8,694.6 H156.4 L160.4,681" fill="#f6f6f6" stroke="#6a6a6a" stroke-width="1"/><circle cx="149.5" cy="728.4" r="6.2" fill="#fff" stroke="#555" stroke-width="1"/><circle cx="173.6" cy="728.4" r="6.2" fill="#fff" stroke="#555" stroke-width="1"/><circle cx="197.6" cy="728.4" r="6.2" fill="#fff" stroke="#555" stroke-width="1"/><circle cx="197.6" cy="728.4" r="3.2" fill="#1a1a1a"/><circle cx="222" cy="728.4" r="6.2" fill="#fff" stroke="#555" stroke-width="1"/><circle cx="245.6" cy="728.4" r="6.2" fill="#fff" stroke="#555" stroke-width="1"/><path d="M139,719 V737" stroke="#c4c4c4" stroke-width="1"/><path d="M162.5,719 V737" stroke="#c4c4c4" stroke-width="1"/><path d="M186.5,719 V737" stroke="#c4c4c4" stroke-width="1"/><path d="M210.5,719 V737" stroke="#c4c4c4" stroke-width="1"/><path d="M234.5,719 V737" stroke="#c4c4c4" stroke-width="1"/><path d="M258.7,719 V737" stroke="#c4c4c4" stroke-width="1"/><rect x="284.1" y="706" width="25.7" height="25.7" fill="#808080"/><path d="M284.1,712.4 H291.8 L299.6,722" fill="none" stroke="#fff" stroke-width="5"/><circle cx="300.7" cy="723.2" r="5.3" fill="#fff"/><path d="M284.1,712.4 H291.8 L299.6,722" fill="none" stroke="#000" stroke-width="2.6"/><circle cx="300.7" cy="723.2" r="4" fill="#000"/><circle cx="300.7" cy="723.2" r="1.3" fill="#fff"/><path d="M324,718.3 H351 M337.4,705 V732" stroke="#8a8a8a" stroke-width="1"/><circle cx="337.4" cy="718.3" r="5.4" fill="#f4f4f4" stroke="#808080" stroke-width="4"/><path d="M334,718.3 H340.8 M337.4,714.9 V721.7" stroke="#9a9a9a" stroke-width="1"/><ellipse cx="379.2" cy="719" rx="14" ry="5.4" transform="rotate(-27 379.2 719)" fill="none" stroke="#3c3c3c" stroke-width="1.7"/><path d="M366.9,707.3 L390.9,730.3 M390.9,707.3 L366.9,730.3" stroke="#c81414" stroke-width="1.7"/></svg>
<div class="abs" style="left:111.9px;top:680.4px;font-size:11.6px;line-height:14px;color:#111;white-space:nowrap"><span style="display:inline-block;white-space:pre;transform:scaleX(0.9297);transform-origin:left center">Плата 1</span></div>
<div id="task" class="abs"></div>
<div class="tbtn" style="left:134px;width:42px"></div><div class="tbtn" style="left:180px;width:38px"></div><div class="tbtn" style="left:226px;width:38px"></div>
<div class="tbtn" style="left:272px;width:43px;background:rgba(255,255,255,.42);border-color:rgba(255,255,255,.7)"></div>
<div class="abs" style="left:1247.2px;top:747.2px;font-size:12.5px;line-height:15px;color:#fff"><span style="display:inline-block;white-space:pre;transform:scaleX(0.8390);transform-origin:left center">РУС</span></div>
<div class="abs" style="left:1300.2px;top:747.2px;font-size:12.5px;line-height:15px;color:#fff;letter-spacing:-0.3px"><span style="display:inline-block;white-space:pre;transform:scaleX(0.8965);transform-origin:left center">23:35</span></div>
<svg style="position:absolute;left:0;top:0;pointer-events:none" width="1366" height="768" viewBox="0 0 1366 768" font-family="'Liberation Sans', sans-serif" ><path d="M6.8,746.6 L15.6,745.2 V752.6 H6.8 Z M16.8,745 L27.8,743.2 V752.6 H16.8 Z M6.8,753.8 H15.6 V761.2 L6.8,759.8 Z M16.8,753.8 H27.8 V763 L16.8,761.4 Z" fill="#fff"/><path d="M55,749.2 V747.6 H60.6 L62,749.2 Z" fill="#e8c45c"/><rect x="55" y="749.2" width="16.2" height="10.8" fill="#f2d878"/><rect x="57.4" y="751.6" width="11.4" height="8.4" fill="#6ab0d8"/><rect x="59.2" y="754" width="7.8" height="6" fill="#a8d8b4"/><path d="M55,758 H71.2 V760 H55 Z" fill="#e6c860"/><circle cx="109.6" cy="752.8" r="7.4" fill="#2cb02c"/><path d="M103.4,757 L102.4,760.4 L106.6,759.4 Z" fill="#2cb02c"/><circle cx="109.6" cy="752.8" r="4.6" fill="none" stroke="#fff" stroke-width="1.2"/><circle cx="109.6" cy="752.8" r="1.9" fill="none" stroke="#fff" stroke-width="1.2"/><path d="M111.6,751 V754.4 Q112.6,755.6 114,754" fill="none" stroke="#fff" stroke-width="1.1"/><path d="M147.4,745 H161 L163,747 V760 H147.4 Z" fill="#2a44d2"/><rect x="150.6" y="745" width="8" height="4.6" fill="#e8ecf8"/><rect x="155.4" y="745.6" width="2" height="3.4" fill="#2a44d2"/><rect x="149.6" y="752" width="11.4" height="8" fill="#f4f4f4"/><path d="M150.6,754.4 H160 M150.6,757 H160" stroke="#e04848" stroke-width="1.4"/><circle cx="198.6" cy="753.3" r="7.3" fill="#e8e8e8"/><path d="M198.6,753.3 L192.3,749.6 A7.3,7.3 0 0 1 204.9,749.6 Z" fill="#de4c3c"/><path d="M198.6,753.3 L204.9,749.6 A7.3,7.3 0 0 1 198.6,760.6 Z" fill="#f2c83c"/><path d="M198.6,753.3 L198.6,760.6 A7.3,7.3 0 0 1 192.3,749.6 Z" fill="#3ca85c"/><circle cx="198.6" cy="753.3" r="3.3" fill="#fff"/><circle cx="198.6" cy="753.3" r="2.5" fill="#4a8cf0"/><rect x="236.8" y="748" width="13.4" height="10" fill="#f4f8fc" stroke="#dce8f4" stroke-width="1"/><rect x="238.2" y="749.4" width="10.6" height="7.2" fill="#7ab4d8"/><path d="M238.2,756.6 L242,752.6 L245,755 L247,753.4 L248.8,756.6 Z" fill="#3c7c6c"/><defs><radialGradient id="gj" cx="45%" cy="45%" r="60%"><stop offset="0" stop-color="#34c834"/><stop offset="1" stop-color="#0c860c"/></radialGradient></defs><rect x="290.4" y="745" width="4.8" height="6" rx="1" fill="#0e8a0e"/><rect x="296" y="751" width="5.4" height="4.8" rx="1" fill="#0e8a0e"/><circle cx="292.6" cy="754.2" r="6" fill="url(#gj)"/><circle cx="292.2" cy="754.2" r="1.5" fill="#d8ffd8"/><rect x="218.2" y="739.5" width="3.6" height="26.5" fill="rgba(255,255,255,.18)"/><rect x="264" y="739.5" width="3.6" height="26.5" fill="rgba(255,255,255,.18)"/><path d="M1171.6,756.4 L1175.6,751.8 L1179.6,756.4 Z" fill="#fff"/><rect x="1200.2" y="747.6" width="7.2" height="12.6" rx="1" fill="#fff"/><rect x="1201.6" y="749" width="4.4" height="9.8" fill="none" stroke="#3c5c8c" stroke-width=".7"/><rect x="1202.4" y="746.6" width="2.8" height="1.6" fill="#fff"/><path d="M1195.6,746.8 V750 M1198.2,746.8 V750" stroke="#fff" stroke-width="1.1"/><path d="M1194.2,750 H1199.6 V752.6 Q1199.6,754 1196.9,754 Q1194.2,754 1194.2,752.6 Z" fill="#fff"/><path d="M1196.9,754 V760" stroke="#fff" stroke-width="1.2"/><path d="M1218.6,751 H1221 L1224.6,747.6 V759.6 L1221,756.2 H1218.6 Z" fill="#fff"/><path d="M1227,750.4 Q1229,753.6 1227,756.8" fill="none" stroke="#fff" stroke-width="1"/><path d="M1229.4,748.8 Q1232.2,753.6 1229.4,758.4" fill="none" stroke="#dce8f8" stroke-width=".9"/></svg>
<svg style="position:absolute;left:0;top:0;pointer-events:none" width="1366" height="768" viewBox="0 0 1366 768" font-family="'Liberation Sans', sans-serif" ><defs><radialGradient id="gi" cx="45%" cy="45%" r="60%"><stop offset="0" stop-color="#2cc02c"/><stop offset="1" stop-color="#0a740a"/></radialGradient></defs><rect x="6.2" y="2.4" width="5.2" height="6" rx="1" fill="#0c7e0c"/><rect x="13" y="9.8" width="4.8" height="5.2" rx="1" fill="#0c7e0c"/><circle cx="8.9" cy="12.3" r="5.8" fill="url(#gi)"/><circle cx="8.7" cy="12.3" r="1.5" fill="#d0ffd0"/><rect x="1274" y="11" width="8.4" height="2.2" fill="#14203c"/><path d="M1301.6,6.6 V4.4 H1308.8 V10.8 H1306.8" fill="none" stroke="#14203c" stroke-width="1.1"/><rect x="1299.6" y="6.8" width="7" height="6" fill="none" stroke="#14203c" stroke-width="1.3"/><path d="M1337.4,6 L1344.6,13.2 M1344.6,6 L1337.4,13.2" stroke="#fff" stroke-width="1.7"/></svg>

</body></html>
